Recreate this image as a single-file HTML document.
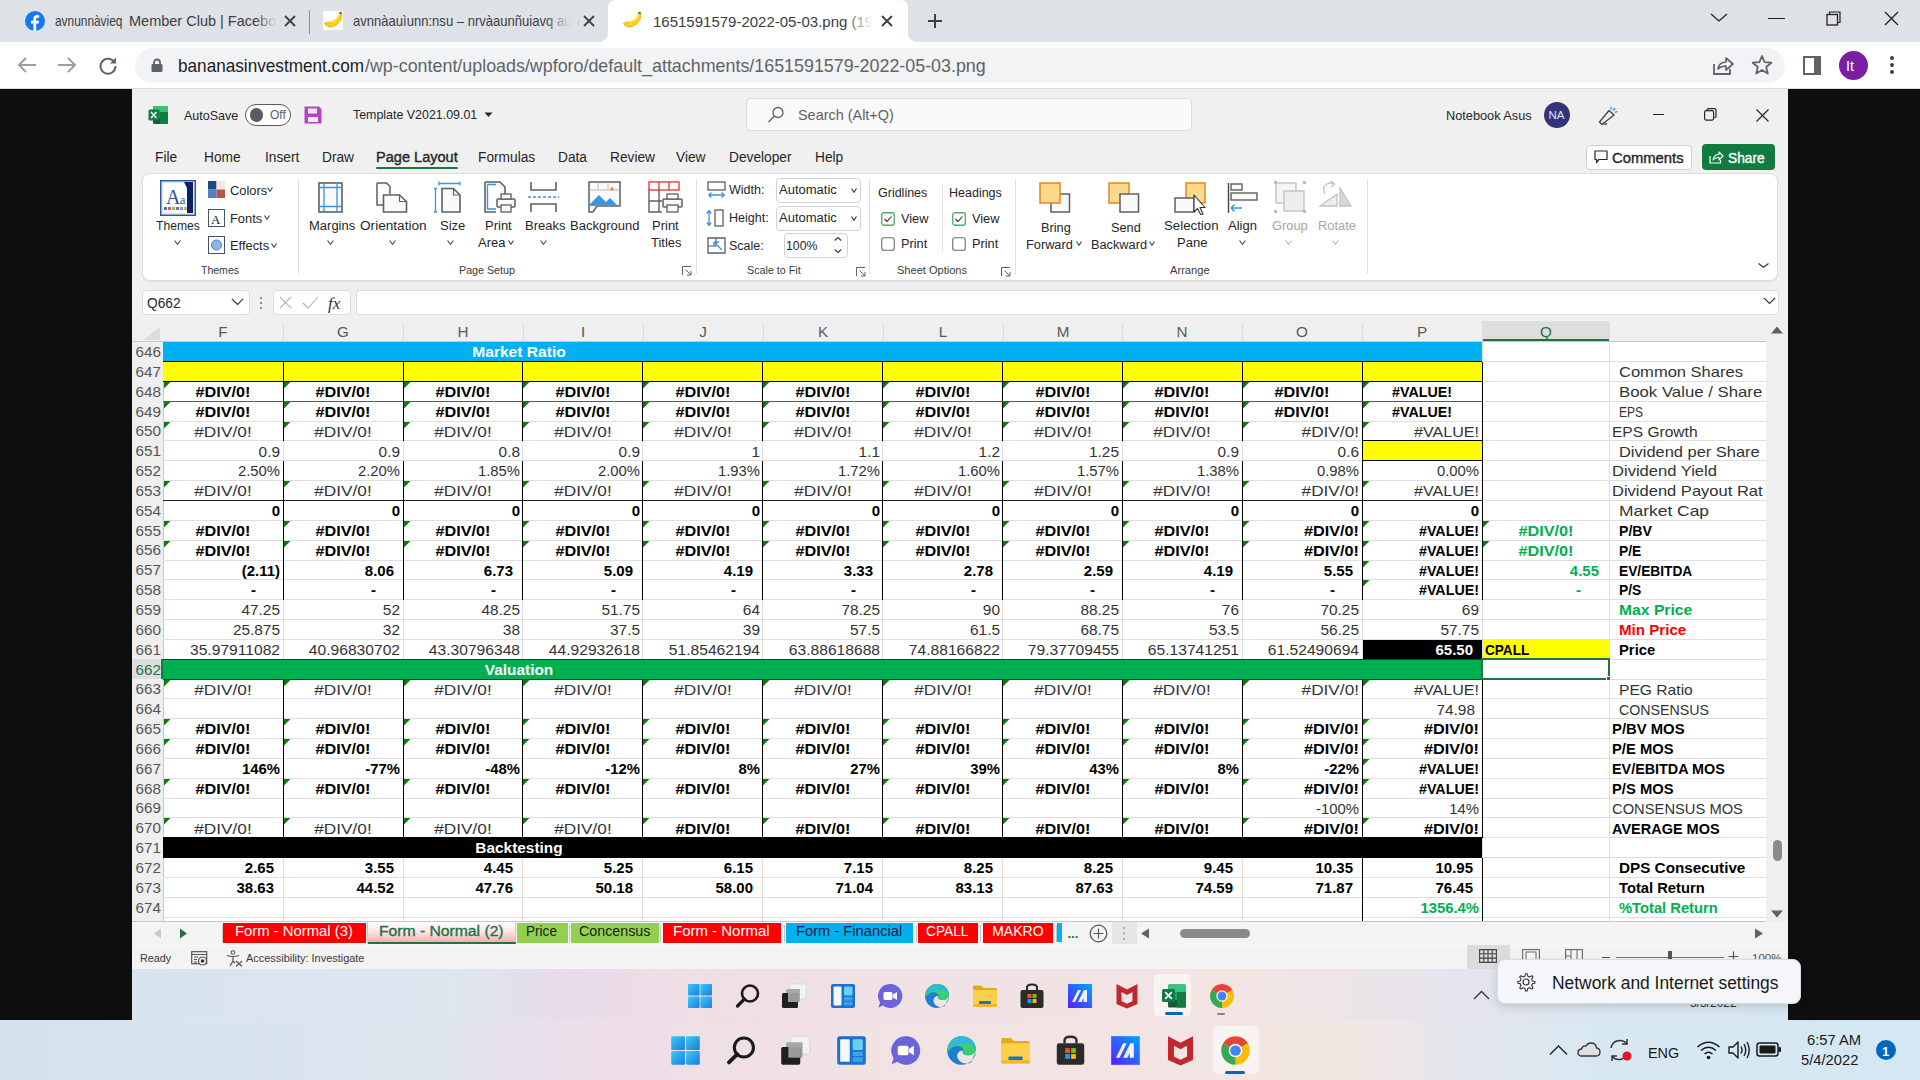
<!DOCTYPE html><html><head><meta charset="utf-8"><style>
*{box-sizing:border-box}
html,body{margin:0;padding:0;width:1920px;height:1080px;overflow:hidden;background:#0e0e0e;font-family:"Liberation Sans", sans-serif;position:relative}
.a{position:absolute}
.t{position:absolute;white-space:nowrap;line-height:1}
</style></head><body>
<div class="a" style="left:0px;top:0px;width:1920px;height:43px;background:#dee1e6;"></div><div class="a" style="left:0px;top:42px;width:1920px;height:46px;background:#ffffff;"></div><div class="a" style="left:0px;top:88px;width:1920px;height:1px;background:#dadce0;"></div><svg class="a" style="left:592px;top:0px;" width="332" height="43" viewBox="0 0 332 43"><path d="M0 43 Q16 43 16 33 L16 8 Q16 0 24 0 L308 0 Q316 0 316 8 L316 33 Q316 43 332 43 Z" fill="#fff"/></svg><svg class="a" style="left:25px;top:11px;" width="20" height="20" viewBox="0 0 20 20"><circle cx="10" cy="10" r="10" fill="#1877f2"/><path d="M11.2 20 V12.6 H13.6 L14 9.8 H11.2 V8.1 C11.2 7.3 11.5 6.7 12.6 6.7 H14.1 V4.2 C13.8 4.2 12.9 4.1 11.9 4.1 C9.8 4.1 8.4 5.4 8.4 7.7 V9.8 H6 V12.6 H8.4 V20 Z" fill="#fff"/></svg><div class="t" style="left:55px;top:13.73px;font-size:14.5px;color:#3c4043;font-weight:400;transform:scaleX(0.82);transform-origin:0 0;">avnunnàvieq</div><div class="t" style="left:129px;top:13.73px;font-size:14.5px;color:#3c4043;font-weight:400;">Member Club | Facebo</div><div class="a" style="left:255px;top:8px;width:22px;height:28px;background:linear-gradient(90deg, rgba(222,225,230,0), #dee1e6);"></div><svg class="a" style="left:284px;top:15px;" width="12" height="12" viewBox="0 0 12 12"><path d="M1 1 L11 11 M11 1 L1 11" stroke="#3c4043" stroke-width="1.8"/></svg><div class="a" style="left:309px;top:10px;width:1px;height:24px;background:#8e9196;"></div><svg class="a" style="left:323px;top:11px;" width="20" height="19" viewBox="0 0 20 19"><rect x="0" y="0" width="20" height="19" fill="#fff"/><path d="M1.5 12.5 C4 17.5 12 17.5 17.5 9.5 C18.8 7.5 19 5 18.5 2.5 L16.5 2.5 C16 8 11 12.5 4 11.5 Z" fill="#ffcf1f" stroke="#e5a400" stroke-width="0.8"/><path d="M3 10 C9 11 14 8 15.5 3 L17 3 C17 6 14 10.5 8 11.8 Z" fill="#ffe55c"/><path d="M16.3 1 L18.6 0.8 L18.8 3 L16.6 3 Z" fill="#7a5a10"/></svg><div class="t" style="left:353px;top:13.73px;font-size:14.5px;color:#3c4043;font-weight:400;transform:scaleX(0.9);transform-origin:0 0;">avnnàauìunn:nsu – nrvàaunñuiavq aun</div><div class="a" style="left:545px;top:8px;width:33px;height:28px;background:linear-gradient(90deg, rgba(222,225,230,0), #dee1e6 80%);"></div><svg class="a" style="left:583px;top:15px;" width="12" height="12" viewBox="0 0 12 12"><path d="M1 1 L11 11 M11 1 L1 11" stroke="#3c4043" stroke-width="1.8"/></svg><svg class="a" style="left:622px;top:11px;" width="20" height="19" viewBox="0 0 20 19"><path d="M1.5 12.5 C4 17.5 12 17.5 17.5 9.5 C18.8 7.5 19 5 18.5 2.5 L16.5 2.5 C16 8 11 12.5 4 11.5 Z" fill="#ffcf1f" stroke="#e5a400" stroke-width="0.8"/><path d="M3 10 C9 11 14 8 15.5 3 L17 3 C17 6 14 10.5 8 11.8 Z" fill="#ffe55c"/><path d="M16.3 1 L18.6 0.8 L18.8 3 L16.6 3 Z" fill="#7a5a10"/></svg><div class="t" style="left:653px;top:14.3px;font-size:15px;color:#3c4043;font-weight:400;">1651591579-2022-05-03.png (19</div><div class="a" style="left:845px;top:8px;width:28px;height:28px;background:linear-gradient(90deg, rgba(255,255,255,0), #fff);"></div><svg class="a" style="left:881px;top:15px;" width="12" height="12" viewBox="0 0 12 12"><path d="M1 1 L11 11 M11 1 L1 11" stroke="#3c4043" stroke-width="1.8"/></svg><svg class="a" style="left:927px;top:13px;" width="16" height="16" viewBox="0 0 16 16"><path d="M8 1 V15 M1 8 H15" stroke="#3c4043" stroke-width="2"/></svg><svg class="a" style="left:1710px;top:13px;" width="18" height="10" viewBox="0 0 18 10"><path d="M1 1 L9 8 L17 1" stroke="#202124" stroke-width="1.3" fill="none"/></svg><div class="a" style="left:1768px;top:18px;width:17px;height:1.3px;background:#202124;"></div><svg class="a" style="left:1826px;top:11px;" width="15" height="15" viewBox="0 0 15 15"><rect x="1" y="3.5" width="10.5" height="10.5" stroke="#202124" stroke-width="1.3" fill="none"/><path d="M3.5 3.5 V1 H14 V11.5 H11.5" stroke="#202124" stroke-width="1.2" fill="none"/></svg><svg class="a" style="left:1884px;top:11px;" width="15" height="15" viewBox="0 0 15 15"><path d="M1 1 L14 14 M14 1 L1 14" stroke="#202124" stroke-width="1.3"/></svg><svg class="a" style="left:17px;top:56px;" width="20" height="18" viewBox="0 0 20 18"><path d="M19 9 H3 M9 2 L2 9 L9 16" stroke="#9aa0a6" stroke-width="2" fill="none"/></svg><svg class="a" style="left:57px;top:56px;" width="20" height="18" viewBox="0 0 20 18"><path d="M1 9 H17 M11 2 L18 9 L11 16" stroke="#9aa0a6" stroke-width="2" fill="none"/></svg><svg class="a" style="left:98px;top:55px;" width="20" height="20" viewBox="0 0 20 20"><path d="M16.5 7.5 A7.5 7.5 0 1 0 17.5 11" stroke="#5f6368" stroke-width="2" fill="none"/><path d="M18 2.5 V8.5 H12 Z" fill="#5f6368"/></svg><div class="a" style="left:135px;top:48px;width:1650px;height:35px;background:#f1f3f4;border-radius:17.5px"></div><svg class="a" style="left:151px;top:58px;" width="12" height="14" viewBox="0 0 12 14"><path d="M3 6 V4.5 A3 3 0 0 1 9 4.5 V6" stroke="#5f6368" stroke-width="1.8" fill="none"/><rect x="0.5" y="6" width="11" height="8" rx="1" fill="#5f6368"/></svg><div class="t" style="left:178px;top:58.02px;font-size:17.7px;color:#202124;font-weight:400;transform:scaleX(0.97);transform-origin:0 0;">bananasinvestment.com</div><div class="t" style="left:364.5px;top:58.02px;font-size:17.7px;color:#5f6368;font-weight:400;transform:scaleX(1.01);transform-origin:0 0;">/wp-content/uploads/wpforo/default_attachments/1651591579-2022-05-03.png</div><svg class="a" style="left:1711px;top:54px;" width="24" height="22" viewBox="0 0 24 22"><path d="M3 10 V20 H19 V15" stroke="#5f6368" stroke-width="1.8" fill="none"/><path d="M7 15 Q8 8 15 8 V4 L22 10 L15 16 V12 Q10 12 7 15 Z" stroke="#5f6368" stroke-width="1.7" fill="none" stroke-linejoin="round"/></svg><svg class="a" style="left:1751px;top:54px;" width="22" height="22" viewBox="0 0 22 22"><path d="M11 2 L13.6 8.2 L20.3 8.7 L15.2 13 L16.8 19.6 L11 16 L5.2 19.6 L6.8 13 L1.7 8.7 L8.4 8.2 Z" stroke="#5f6368" stroke-width="1.8" fill="none" stroke-linejoin="round"/></svg><svg class="a" style="left:1803px;top:56px;" width="19" height="19" viewBox="0 0 19 19"><rect x="1" y="1" width="16" height="17" stroke="#5f6368" stroke-width="2" fill="none"/><rect x="11" y="1" width="6" height="17" fill="#5f6368"/></svg><div class="a" style="left:1839px;top:51px;width:29px;height:29px;background:#7b1fa2;border-radius:50%"></div><div class="t" style="left:1846px;top:58.73px;font-size:14.5px;color:#fff;font-weight:400;">It</div><svg class="a" style="left:1888px;top:55px;" width="8" height="20" viewBox="0 0 8 20"><circle cx="4" cy="3" r="2" fill="#3c4043"/><circle cx="4" cy="10" r="2" fill="#3c4043"/><circle cx="4" cy="17" r="2" fill="#3c4043"/></svg><div class="a" style="left:132px;top:88.5px;width:1656px;height:931.5px;background:#f0f0f0;"></div><svg class="a" style="left:148px;top:105px;" width="21" height="20" viewBox="0 0 21 20"><rect x="5" y="1" width="15" height="18" rx="1.5" fill="#185c37"/><rect x="5" y="1" width="15" height="6" rx="1" fill="#33c481"/><rect x="5" y="7" width="15" height="6" fill="#21a366"/><rect x="12" y="7" width="8" height="12" fill="#107c41"/><rect x="0.5" y="4.5" width="11" height="11" rx="1.2" fill="#107c41"/><path d="M3 7 L8.5 13 M8.5 7 L3 13" stroke="#fff" stroke-width="1.6"/></svg><div class="t" style="left:184px;top:109.0px;font-size:13px;color:#262626;font-weight:400;transform:scaleX(0.96);transform-origin:0 0;">AutoSave</div><div class="a" style="left:245px;top:104px;width:46px;height:21.5px;background:#fff;border:1.5px solid #5c5c5c;border-radius:11px"></div><div class="a" style="left:249.5px;top:108px;width:13.5px;height:13.5px;border-radius:50%;background:#5c5c5c"></div><div class="t" style="left:270px;top:108.84px;font-size:12px;color:#5c5c5c;font-weight:400;">Off</div><svg class="a" style="left:304px;top:106px;" width="18" height="18" viewBox="0 0 18 18"><path d="M0.5 0.5 H15 L17.5 3 V17.5 H0.5 Z" fill="#b146c2"/><rect x="4" y="2.5" width="9" height="5" fill="#f6e6f9"/><rect x="4" y="11" width="10" height="5" fill="#f6e6f9"/></svg><div class="t" style="left:353px;top:109.16px;font-size:12.8px;color:#262626;font-weight:400;transform:scaleX(0.97);transform-origin:0 0;">Template V2021.09.01</div><svg class="a" style="left:484px;top:112px;" width="9" height="6" viewBox="0 0 9 6"><path d="M0.5 0.5 H8.5 L4.5 5 Z" fill="#262626"/></svg><div class="a" style="left:745.5px;top:98px;width:446px;height:33px;background:#fafafa;border:1px solid #dadada;border-radius:4px"></div><svg class="a" style="left:767px;top:106px;" width="18" height="18" viewBox="0 0 18 18"><circle cx="11" cy="6.5" r="5" stroke="#616161" stroke-width="1.3" fill="none"/><path d="M7.5 10 L1.5 16" stroke="#616161" stroke-width="1.5"/></svg><div class="t" style="left:798px;top:107.73px;font-size:14.5px;color:#616161;font-weight:400;transform:scaleX(0.995);transform-origin:0 0;">Search (Alt+Q)</div><div class="t" style="left:1446px;top:109.0px;font-size:13px;color:#262626;font-weight:400;transform:scaleX(0.98);transform-origin:0 0;">Notebook Asus</div><div class="a" style="left:1544px;top:102px;width:26px;height:26px;background:#35337a;border-radius:50%"></div><div class="t" style="left:1548.5px;top:109.77px;font-size:11.5px;color:#dfe6ff;font-weight:400;">NA</div><svg class="a" style="left:1597px;top:104px;" width="24" height="22" viewBox="0 0 24 22"><path d="M2.5 18 L12 6.5 L17 11 L5 20.5 Z" stroke="#424242" stroke-width="1.3" fill="none" stroke-linejoin="round"/><path d="M6 18.5 Q7.5 21.5 10 19.5" stroke="#424242" stroke-width="1.2" fill="none"/><path d="M14.5 3 L13.8 5.5 M18 4 L16.2 6.5 M20.5 7.5 L18 8.3" stroke="#1e8fe0" stroke-width="1.3"/></svg><div class="a" style="left:1652.5px;top:113.5px;width:11px;height:1.3px;background:#262626;"></div><svg class="a" style="left:1704px;top:108px;" width="13" height="13" viewBox="0 0 13 13"><rect x="0.6" y="2.6" width="9" height="9.5" rx="1.5" stroke="#262626" stroke-width="1.2" fill="none"/><path d="M3 2.6 V2 Q3 0.6 4.5 0.6 H10.5 Q12 0.6 12 2 V8 Q12 9.6 10.5 9.6" stroke="#262626" stroke-width="1.2" fill="none"/></svg><svg class="a" style="left:1756px;top:108.5px;" width="13" height="13" viewBox="0 0 13 13"><path d="M0.5 0.5 L12.5 12.5 M12.5 0.5 L0.5 12.5" stroke="#262626" stroke-width="1.2"/></svg><div class="t" style="left:154.5px;top:150.35px;font-size:14px;color:#262626;font-weight:400;transform:scaleX(0.98);transform-origin:0 0;">File</div><div class="t" style="left:204px;top:150.35px;font-size:14px;color:#262626;font-weight:400;transform:scaleX(0.98);transform-origin:0 0;">Home</div><div class="t" style="left:265px;top:150.35px;font-size:14px;color:#262626;font-weight:400;transform:scaleX(0.98);transform-origin:0 0;">Insert</div><div class="t" style="left:322px;top:150.35px;font-size:14px;color:#262626;font-weight:400;transform:scaleX(0.98);transform-origin:0 0;">Draw</div><div class="t" style="left:478px;top:150.35px;font-size:14px;color:#262626;font-weight:400;transform:scaleX(0.98);transform-origin:0 0;">Formulas</div><div class="t" style="left:558px;top:150.35px;font-size:14px;color:#262626;font-weight:400;transform:scaleX(0.98);transform-origin:0 0;">Data</div><div class="t" style="left:610px;top:150.35px;font-size:14px;color:#262626;font-weight:400;transform:scaleX(0.98);transform-origin:0 0;">Review</div><div class="t" style="left:676px;top:150.35px;font-size:14px;color:#262626;font-weight:400;transform:scaleX(0.98);transform-origin:0 0;">View</div><div class="t" style="left:728.5px;top:150.35px;font-size:14px;color:#262626;font-weight:400;transform:scaleX(0.98);transform-origin:0 0;">Developer</div><div class="t" style="left:815px;top:150.35px;font-size:14px;color:#262626;font-weight:400;transform:scaleX(0.98);transform-origin:0 0;">Help</div><div class="t" style="left:376px;top:150.35px;font-size:14px;color:#262626;font-weight:400;transform:scaleX(1.04);transform-origin:0 0;-webkit-text-stroke:0.35px #262626;">Page Layout</div><div class="a" style="left:376px;top:166.5px;width:82px;height:2.5px;background:#107c41;border-radius:1px"></div><div class="a" style="left:1586px;top:144.5px;width:106px;height:25px;background:#fff;border:1px solid #d1d1d1;border-radius:4px"></div><svg class="a" style="left:1594px;top:150px;" width="14" height="14" viewBox="0 0 14 14"><path d="M1 1 H13 V9.5 H5 L2.5 12.5 V9.5 H1 Z" stroke="#262626" stroke-width="1.2" fill="none" stroke-linejoin="round"/></svg><div class="t" style="left:1611.5px;top:150.65px;font-size:14px;color:#262626;font-weight:400;transform:scaleX(1.058);transform-origin:0 0;-webkit-text-stroke:0.35px #262626;">Comments</div><div class="a" style="left:1702px;top:144px;width:73px;height:26px;background:#107c41;border-radius:4px"></div><svg class="a" style="left:1709px;top:150px;" width="15" height="14" viewBox="0 0 15 14"><path d="M1 6 V13 H11.5 V10" stroke="#fff" stroke-width="1.2" fill="none"/><path d="M4 10 Q5 4.5 10 4.5 V2 L14 6 L10 10 V7.3 Q6.5 7.3 4 10 Z" stroke="#fff" stroke-width="1.1" fill="none" stroke-linejoin="round"/></svg><div class="t" style="left:1728px;top:150.65px;font-size:14px;color:#fff;font-weight:400;transform:scaleX(0.98);transform-origin:0 0;-webkit-text-stroke:0.35px #fff;">Share</div><div class="a" style="left:141.5px;top:173px;width:1636px;height:108px;background:#fff;border:1px solid #dedede;border-radius:8px;box-shadow:0 1px 1.5px rgba(0,0,0,0.08)"></div><svg class="a" style="left:160px;top:180px;" width="36" height="36" viewBox="0 0 36 36"><rect x="0.75" y="0.75" width="34.5" height="34.5" fill="#fff" stroke="#2f5597" stroke-width="1.5"/><rect x="2.5" y="2.5" width="31" height="31" fill="#fff" stroke="#c7d2e8" stroke-width="0.6"/><path d="M24 2 H33 V33 H27 V8 Z" fill="#0b2265"/><text x="6" y="24" font-family="Liberation Serif" font-size="20" fill="#2f5597">A</text><text x="20" y="24" font-family="Liberation Serif" font-size="12" fill="#2f5597">a</text><rect x="4" y="27" width="3" height="3" fill="#4472c4"/><rect x="8" y="27" width="3" height="3" fill="#e15759"/><rect x="12" y="27" width="3" height="3" fill="#8cc152"/><rect x="16" y="27" width="3" height="3" fill="#9b59b6"/><rect x="20" y="27" width="3" height="3" fill="#2ec4d6"/><rect x="24" y="27" width="3" height="3" fill="#ff9f43"/></svg><div class="t" style="left:155.5px;top:220.22px;font-size:12.5px;color:#262626;font-weight:400;transform:scaleX(0.97);transform-origin:0 0;">Themes</div><svg class="a" style="left:173.5px;top:240.0px;" width="7" height="5" viewBox="0 0 7 5"><path d="M0.5 0.5 L3.5 4.3 L6.5 0.5" stroke="#444" stroke-width="1.1" fill="none"/></svg><svg class="a" style="left:208px;top:181px;" width="17" height="17" viewBox="0 0 17 17"><rect x="0" y="0" width="8.5" height="8.5" fill="#1f497d"/><rect x="8.5" y="0" width="8.5" height="8.5" fill="#eeece1"/><rect x="0" y="8.5" width="8.5" height="8.5" fill="#4f81bd"/><rect x="8.5" y="8.5" width="8.5" height="8.5" fill="#c0504d"/></svg><div class="t" style="left:229.5px;top:185.22px;font-size:12.5px;color:#262626;font-weight:400;transform:scaleX(1.03);transform-origin:0 0;">Colors</div><svg class="a" style="left:267.0px;top:187.0px;" width="6" height="5" viewBox="0 0 6 5"><path d="M0.5 0.5 L3.0 4.3 L5.5 0.5" stroke="#444" stroke-width="1.1" fill="none"/></svg><svg class="a" style="left:208px;top:208.5px;" width="17" height="18" viewBox="0 0 17 18"><rect x="0.5" y="0.5" width="16" height="17" fill="#fff" stroke="#44546a" stroke-width="1"/><text x="3" y="15" font-family="Liberation Serif" font-size="13" fill="#1a1a1a">A</text></svg><div class="t" style="left:229.5px;top:212.82px;font-size:12.5px;color:#262626;font-weight:400;transform:scaleX(1.03);transform-origin:0 0;">Fonts</div><svg class="a" style="left:264.0px;top:215.0px;" width="6" height="5" viewBox="0 0 6 5"><path d="M0.5 0.5 L3.0 4.3 L5.5 0.5" stroke="#444" stroke-width="1.1" fill="none"/></svg><svg class="a" style="left:208px;top:236px;" width="17" height="18" viewBox="0 0 17 18"><rect x="0.5" y="0.5" width="16" height="17" fill="#fff" stroke="#44546a" stroke-width="1"/><circle cx="8.5" cy="9" r="5" fill="#8db4e2" stroke="#4f81bd" stroke-width="1"/></svg><div class="t" style="left:229.5px;top:240.12px;font-size:12.5px;color:#262626;font-weight:400;transform:scaleX(1.03);transform-origin:0 0;">Effects</div><svg class="a" style="left:270.5px;top:242.5px;" width="6" height="5" viewBox="0 0 6 5"><path d="M0.5 0.5 L3.0 4.3 L5.5 0.5" stroke="#444" stroke-width="1.1" fill="none"/></svg><div class="t" style="left:201px;top:265.02px;font-size:11.2px;color:#3a3a3a;font-weight:400;transform:scaleX(0.94);transform-origin:0 0;">Themes</div><div class="a" style="left:297.5px;top:179px;width:1px;height:95px;background:#e1e1e1;"></div><svg class="a" style="left:318px;top:182px;" width="25" height="31" viewBox="0 0 25 31"><rect x="1" y="1" width="23" height="29" fill="#fafafa" stroke="#5f5f5f" stroke-width="1.6"/><path d="M1 5.5 H24 M1 24.5 H24 M6 1 V30 M19 1 V30" stroke="#3a96dd" stroke-width="1.3"/></svg><div class="t" style="left:309px;top:219.92px;font-size:12.5px;color:#262626;font-weight:400;transform:scaleX(1.04);transform-origin:0 0;">Margins</div><svg class="a" style="left:327.0px;top:240.0px;" width="7" height="5" viewBox="0 0 7 5"><path d="M0.5 0.5 L3.5 4.3 L6.5 0.5" stroke="#444" stroke-width="1.1" fill="none"/></svg><svg class="a" style="left:376px;top:182px;" width="32" height="31" viewBox="0 0 32 31"><path d="M1 1 H10.5 L14 4.5 V12 M1 1 V23 H7" stroke="#5f5f5f" stroke-width="1.5" fill="#fafafa"/><path d="M7.5 13 H23.5 L30.5 19.5 V30 H7.5 Z" stroke="#5f5f5f" stroke-width="1.6" fill="#fafafa"/><path d="M23.5 13 V19.5 H30.5" stroke="#5f5f5f" stroke-width="1.2" fill="none"/></svg><div class="t" style="left:360px;top:219.92px;font-size:12.5px;color:#262626;font-weight:400;transform:scaleX(1.09);transform-origin:0 0;">Orientation</div><svg class="a" style="left:388.5px;top:240.0px;" width="7" height="5" viewBox="0 0 7 5"><path d="M0.5 0.5 L3.5 4.3 L6.5 0.5" stroke="#444" stroke-width="1.1" fill="none"/></svg><svg class="a" style="left:434px;top:181px;" width="28" height="32" viewBox="0 0 28 32"><path d="M5 2.5 H26 M5 0.5 V4.5 M26 0.5 V4.5 M1.5 7.5 V31 M0 7.5 H3 M0 31 H3" stroke="#3a96dd" stroke-width="1.3"/><path d="M8 7.5 H19.5 L26 14 V31 H8 Z" stroke="#5f5f5f" stroke-width="1.6" fill="#fafafa"/><path d="M19.5 7.5 V14 H26" stroke="#5f5f5f" stroke-width="1.2" fill="none"/></svg><div class="t" style="left:439.5px;top:219.92px;font-size:12.5px;color:#262626;font-weight:400;transform:scaleX(1.04);transform-origin:0 0;">Size</div><svg class="a" style="left:447.0px;top:240.0px;" width="7" height="5" viewBox="0 0 7 5"><path d="M0.5 0.5 L3.5 4.3 L6.5 0.5" stroke="#444" stroke-width="1.1" fill="none"/></svg><svg class="a" style="left:484px;top:181px;" width="32" height="32" viewBox="0 0 32 32"><path d="M1 1 H16 L21 6 V14 M1 1 V31 H12" stroke="#5f5f5f" stroke-width="1.6" fill="#fafafa"/><path d="M3.5 3.5 V28 H12 M3.5 3.5 H12" stroke="#3a96dd" stroke-width="1.3" fill="none"/><rect x="13" y="18" width="18" height="8" rx="1" stroke="#5f5f5f" stroke-width="1.5" fill="#fafafa"/><rect x="17" y="13" width="10" height="5" stroke="#5f5f5f" stroke-width="1.3" fill="#fafafa"/><rect x="17" y="24" width="10" height="7" stroke="#5f5f5f" stroke-width="1.3" fill="#fafafa"/></svg><div class="t" style="left:485px;top:219.92px;font-size:12.5px;color:#262626;font-weight:400;transform:scaleX(1.04);transform-origin:0 0;">Print</div><div class="t" style="left:478px;top:237.12px;font-size:12.5px;color:#262626;font-weight:400;transform:scaleX(1.04);transform-origin:0 0;">Area</div><svg class="a" style="left:507.5px;top:240.0px;" width="6" height="5" viewBox="0 0 6 5"><path d="M0.5 0.5 L3.0 4.3 L5.5 0.5" stroke="#444" stroke-width="1.1" fill="none"/></svg><svg class="a" style="left:527px;top:181px;" width="33" height="32" viewBox="0 0 33 32"><path d="M4 1 V9 H29 V1" stroke="#5f5f5f" stroke-width="1.6" fill="none"/><path d="M1 16 H32" stroke="#3a96dd" stroke-width="1.5" stroke-dasharray="3 2"/><path d="M4 31 V23 H29 V31" stroke="#5f5f5f" stroke-width="1.6" fill="none"/></svg><div class="t" style="left:525px;top:219.92px;font-size:12.5px;color:#262626;font-weight:400;transform:scaleX(1.04);transform-origin:0 0;">Breaks</div><svg class="a" style="left:540.0px;top:240.0px;" width="7" height="5" viewBox="0 0 7 5"><path d="M0.5 0.5 L3.5 4.3 L6.5 0.5" stroke="#444" stroke-width="1.1" fill="none"/></svg><svg class="a" style="left:588px;top:181px;" width="33" height="32" viewBox="0 0 33 32"><path d="M1 1 H32 V25 H9 L5 31 H1 Z" stroke="#5f5f5f" stroke-width="1.5" fill="#fafafa"/><path d="M1 9 H32 M10 1 V9 M20 1 V9" stroke="#aaa" stroke-width="0.8"/><path d="M1 24 L11 14 L18 21 L22 17 L30 25 H1 Z" fill="#3a96dd"/><circle cx="24" cy="8" r="1.8" fill="#f28a2e"/></svg><div class="t" style="left:570px;top:219.92px;font-size:12.5px;color:#262626;font-weight:400;transform:scaleX(1.04);transform-origin:0 0;">Background</div><svg class="a" style="left:648px;top:181px;" width="35" height="32" viewBox="0 0 35 32"><path d="M1 1 H31 V9 H1 Z M1 9 H31 M11 1 V9 M21 1 V9" stroke="#e84b4b" stroke-width="1.5" fill="none"/><path d="M1 9 V31 H14 M1 20 H14 M11 9 V31" stroke="#5f5f5f" stroke-width="1.4" fill="none"/><rect x="15" y="18" width="19" height="8" rx="1" stroke="#5f5f5f" stroke-width="1.5" fill="#fafafa"/><rect x="19" y="13" width="11" height="5" stroke="#5f5f5f" stroke-width="1.3" fill="#fafafa"/><rect x="19" y="24" width="11" height="7" stroke="#5f5f5f" stroke-width="1.3" fill="#fafafa"/></svg><div class="t" style="left:652px;top:219.92px;font-size:12.5px;color:#262626;font-weight:400;transform:scaleX(1.04);transform-origin:0 0;">Print</div><div class="t" style="left:651px;top:237.12px;font-size:12.5px;color:#262626;font-weight:400;transform:scaleX(1.04);transform-origin:0 0;">Titles</div><div class="t" style="left:459px;top:265.02px;font-size:11.2px;color:#3a3a3a;font-weight:400;transform:scaleX(0.957);transform-origin:0 0;">Page Setup</div><svg class="a" style="left:681.5px;top:265.5px;" width="10" height="10" viewBox="0 0 10 10"><path d="M0.5 9 V0.5 H9" stroke="#616161" stroke-width="1" fill="none"/><path d="M3.5 3.5 L9 9 M9 5 V9 H5" stroke="#616161" stroke-width="1" fill="none"/></svg><div class="a" style="left:695.5px;top:179px;width:1px;height:95px;background:#e1e1e1;"></div><svg class="a" style="left:707px;top:181px;" width="19" height="18" viewBox="0 0 19 18"><rect x="1" y="1" width="17" height="8" stroke="#5f5f5f" stroke-width="1.3" fill="none"/><path d="M1.5 14 H17.5 M1.5 14 L4.5 11.5 M1.5 14 L4.5 16.5 M17.5 14 L14.5 11.5 M17.5 14 L14.5 16.5" stroke="#3a96dd" stroke-width="1.3" fill="none"/></svg><div class="t" style="left:729px;top:184.22px;font-size:12.5px;color:#262626;font-weight:400;">Width:</div><div class="a" style="left:775.5px;top:177.5px;width:85px;height:25px;background:#fff;border:1px solid #d1d1d1;border-radius:4px"></div><div class="t" style="left:778.5px;top:184.22px;font-size:12.5px;color:#262626;font-weight:400;transform:scaleX(1.04);transform-origin:0 0;">Automatic</div><svg class="a" style="left:851.0px;top:188.0px;" width="6" height="5" viewBox="0 0 6 5"><path d="M0.5 0.5 L3.0 4.3 L5.5 0.5" stroke="#333" stroke-width="1.1" fill="none"/></svg><svg class="a" style="left:706px;top:209px;" width="19" height="18" viewBox="0 0 19 18"><rect x="9" y="1" width="8" height="16" stroke="#5f5f5f" stroke-width="1.3" fill="none"/><path d="M3 1.5 V16.5 M3 1.5 L0.8 4.5 M3 1.5 L5.2 4.5 M3 16.5 L0.8 13.5 M3 16.5 L5.2 13.5" stroke="#3a96dd" stroke-width="1.3" fill="none"/></svg><div class="t" style="left:729px;top:212.22px;font-size:12.5px;color:#262626;font-weight:400;">Height:</div><div class="a" style="left:775.5px;top:205.5px;width:85px;height:25px;background:#fff;border:1px solid #d1d1d1;border-radius:4px"></div><div class="t" style="left:778.5px;top:212.22px;font-size:12.5px;color:#262626;font-weight:400;transform:scaleX(1.04);transform-origin:0 0;">Automatic</div><svg class="a" style="left:851.0px;top:215.5px;" width="6" height="5" viewBox="0 0 6 5"><path d="M0.5 0.5 L3.0 4.3 L5.5 0.5" stroke="#333" stroke-width="1.1" fill="none"/></svg><svg class="a" style="left:707px;top:236.5px;" width="19" height="17" viewBox="0 0 19 17"><path d="M1 1 H18 V16 H1 Z" stroke="#5f5f5f" stroke-width="1.3" fill="none"/><path d="M1 9 H9 V1" stroke="#5f5f5f" stroke-width="1.2" fill="none"/><path d="M15 13 L7 5 M7 5 V10 M7 5 H12" stroke="#3a96dd" stroke-width="1.3" fill="none"/></svg><div class="t" style="left:729px;top:239.62px;font-size:12.5px;color:#262626;font-weight:400;">Scale:</div><div class="a" style="left:783.5px;top:232.5px;width:64px;height:25px;background:#fff;border:1px solid #d1d1d1;border-radius:4px"></div><div class="t" style="left:786px;top:239.62px;font-size:12.5px;color:#262626;font-weight:400;transform:scaleX(0.98);transform-origin:0 0;">100%</div><svg class="a" style="left:834px;top:236px;" width="8" height="18" viewBox="0 0 8 18"><path d="M0.8 4.5 L4 1.5 L7.2 4.5 M0.8 13.5 L4 16.5 L7.2 13.5" stroke="#333" stroke-width="1.1" fill="none"/></svg><div class="t" style="left:746.5px;top:264.52px;font-size:11.2px;color:#3a3a3a;font-weight:400;transform:scaleX(0.96);transform-origin:0 0;">Scale to Fit</div><svg class="a" style="left:855.5px;top:266.5px;" width="10" height="10" viewBox="0 0 10 10"><path d="M0.5 9 V0.5 H9" stroke="#616161" stroke-width="1" fill="none"/><path d="M3.5 3.5 L9 9 M9 5 V9 H5" stroke="#616161" stroke-width="1" fill="none"/></svg><div class="a" style="left:869px;top:179px;width:1px;height:95px;background:#e1e1e1;"></div><div class="t" style="left:878px;top:186.82px;font-size:12.5px;color:#262626;font-weight:400;">Gridlines</div><svg class="a" style="left:881px;top:211.5px;" width="14" height="14" viewBox="0 0 14 14"><rect x="0.75" y="0.75" width="12.5" height="12.5" rx="2" stroke="#55a868" stroke-width="1.3" fill="#fff"/><path d="M3.5 7 L6 9.5 L10.5 4.5" stroke="#262626" stroke-width="1.1" fill="none"/></svg><div class="t" style="left:900.5px;top:212.62px;font-size:12.5px;color:#262626;font-weight:400;transform:scaleX(1.02);transform-origin:0 0;">View</div><svg class="a" style="left:881px;top:237px;" width="14" height="14" viewBox="0 0 14 14"><rect x="0.75" y="0.75" width="12.5" height="12.5" rx="2" stroke="#6b6b6b" stroke-width="1.1" fill="#fff"/></svg><div class="t" style="left:900.5px;top:238.22px;font-size:12.5px;color:#262626;font-weight:400;transform:scaleX(1.02);transform-origin:0 0;">Print</div><div class="a" style="left:942px;top:185px;width:1px;height:67px;background:#e1e1e1;"></div><div class="t" style="left:949px;top:186.82px;font-size:12.5px;color:#262626;font-weight:400;">Headings</div><svg class="a" style="left:952px;top:211.5px;" width="14" height="14" viewBox="0 0 14 14"><rect x="0.75" y="0.75" width="12.5" height="12.5" rx="2" stroke="#55a868" stroke-width="1.3" fill="#fff"/><path d="M3.5 7 L6 9.5 L10.5 4.5" stroke="#262626" stroke-width="1.1" fill="none"/></svg><div class="t" style="left:971.5px;top:212.62px;font-size:12.5px;color:#262626;font-weight:400;transform:scaleX(1.02);transform-origin:0 0;">View</div><svg class="a" style="left:952px;top:237px;" width="14" height="14" viewBox="0 0 14 14"><rect x="0.75" y="0.75" width="12.5" height="12.5" rx="2" stroke="#6b6b6b" stroke-width="1.1" fill="#fff"/></svg><div class="t" style="left:971.5px;top:238.22px;font-size:12.5px;color:#262626;font-weight:400;transform:scaleX(1.02);transform-origin:0 0;">Print</div><div class="t" style="left:897px;top:264.52px;font-size:11.2px;color:#3a3a3a;font-weight:400;transform:scaleX(0.987);transform-origin:0 0;">Sheet Options</div><svg class="a" style="left:1001px;top:266.5px;" width="10" height="10" viewBox="0 0 10 10"><path d="M0.5 9 V0.5 H9" stroke="#616161" stroke-width="1" fill="none"/><path d="M3.5 3.5 L9 9 M9 5 V9 H5" stroke="#616161" stroke-width="1" fill="none"/></svg><div class="a" style="left:1014.5px;top:179px;width:1px;height:95px;background:#e1e1e1;"></div><svg class="a" style="left:1039px;top:182px;" width="32" height="31" viewBox="0 0 32 31"><rect x="12" y="12" width="18.5" height="18" stroke="#5f5f5f" stroke-width="1.5" fill="#fafafa"/><rect x="1" y="1" width="20" height="20" stroke="#e8861c" stroke-width="1.5" fill="#f9d98c"/></svg><div class="t" style="left:1041px;top:221.82px;font-size:12.5px;color:#262626;font-weight:400;transform:scaleX(1.02);transform-origin:0 0;">Bring</div><div class="t" style="left:1026px;top:238.62px;font-size:12.5px;color:#262626;font-weight:400;transform:scaleX(1.02);transform-origin:0 0;">Forward</div><svg class="a" style="left:1076.0px;top:241.0px;" width="6" height="5" viewBox="0 0 6 5"><path d="M0.5 0.5 L3.0 4.3 L5.5 0.5" stroke="#444" stroke-width="1.1" fill="none"/></svg><svg class="a" style="left:1108px;top:182px;" width="32" height="31" viewBox="0 0 32 31"><rect x="1" y="1" width="20" height="20" stroke="#e8861c" stroke-width="1.5" fill="#f9d98c"/><rect x="12" y="12" width="18.5" height="18" stroke="#5f5f5f" stroke-width="1.5" fill="#fafafa"/></svg><div class="t" style="left:1110.5px;top:221.82px;font-size:12.5px;color:#262626;font-weight:400;transform:scaleX(1.02);transform-origin:0 0;">Send</div><div class="t" style="left:1091px;top:238.62px;font-size:12.5px;color:#262626;font-weight:400;transform:scaleX(1.02);transform-origin:0 0;">Backward</div><svg class="a" style="left:1149.0px;top:241.0px;" width="6" height="5" viewBox="0 0 6 5"><path d="M0.5 0.5 L3.0 4.3 L5.5 0.5" stroke="#444" stroke-width="1.1" fill="none"/></svg><svg class="a" style="left:1174px;top:182px;" width="34" height="33" viewBox="0 0 34 33"><rect x="12" y="1" width="19" height="20" stroke="#e8861c" stroke-width="1.5" fill="#f9d98c"/><rect x="1" y="16" width="19" height="14" stroke="#5f5f5f" stroke-width="1.5" fill="#fafafa"/><path d="M20 13 L20 30 L23.5 26.5 L27 33 L29 32 L26 25.5 L31 25.5 Z" stroke="#333" stroke-width="1.1" fill="#fff" stroke-linejoin="round"/></svg><div class="t" style="left:1164px;top:219.82px;font-size:12.5px;color:#262626;font-weight:400;transform:scaleX(1.06);transform-origin:0 0;">Selection</div><div class="t" style="left:1176.5px;top:237.02px;font-size:12.5px;color:#262626;font-weight:400;transform:scaleX(1.04);transform-origin:0 0;">Pane</div><svg class="a" style="left:1227px;top:182px;" width="32" height="32" viewBox="0 0 32 32"><path d="M1.5 1 V31" stroke="#444" stroke-width="1.4"/><rect x="4" y="2" width="11" height="6" stroke="#5f5f5f" stroke-width="1.4" fill="#fafafa"/><rect x="4" y="11" width="26" height="7" stroke="#5f5f5f" stroke-width="1.4" fill="#fafafa"/><path d="M4 26 H15 M4 26 L7.5 22.5 M4 26 L7.5 29.5" stroke="#3a96dd" stroke-width="1.5" fill="none"/></svg><div class="t" style="left:1227.5px;top:219.82px;font-size:12.5px;color:#262626;font-weight:400;transform:scaleX(1.04);transform-origin:0 0;">Align</div><svg class="a" style="left:1238.5px;top:240.0px;" width="7" height="5" viewBox="0 0 7 5"><path d="M0.5 0.5 L3.5 4.3 L6.5 0.5" stroke="#444" stroke-width="1.1" fill="none"/></svg><svg class="a" style="left:1274px;top:181px;" width="32" height="33" viewBox="0 0 32 33"><rect x="2" y="2" width="20" height="20" stroke="#c2c2c2" stroke-width="1.4" fill="#f4f4f4"/><rect x="10" y="10" width="20" height="20" stroke="#c2c2c2" stroke-width="1.4" fill="#eee"/><rect x="0" y="0" width="3" height="3" fill="#bbb"/><rect x="29" y="0" width="3" height="3" fill="#bbb"/><rect x="0" y="29" width="3" height="3" fill="#bbb"/><rect x="29" y="29" width="3" height="3" fill="#bbb"/></svg><div class="t" style="left:1271.5px;top:219.82px;font-size:12.5px;color:#a6a6a6;font-weight:400;transform:scaleX(1.03);transform-origin:0 0;">Group</div><svg class="a" style="left:1284.5px;top:240.0px;" width="7" height="5" viewBox="0 0 7 5"><path d="M0.5 0.5 L3.5 4.3 L6.5 0.5" stroke="#b5b5b5" stroke-width="1.1" fill="none"/></svg><svg class="a" style="left:1319px;top:180px;" width="34" height="28" viewBox="0 0 34 28"><path d="M1 26 L18 14 V26 Z" fill="#ececec" stroke="#c2c2c2" stroke-width="1.3"/><path d="M21 26 V8 L32 26 Z" fill="#d8d8d8" stroke="#c2c2c2" stroke-width="1.3"/><path d="M6 14 Q2 7 8 4 Q12 2 15 4 M12 1 L15.5 4 L12 7" stroke="#c2c2c2" stroke-width="1.3" fill="none"/></svg><div class="t" style="left:1318px;top:219.82px;font-size:12.5px;color:#a6a6a6;font-weight:400;transform:scaleX(1.03);transform-origin:0 0;">Rotate</div><svg class="a" style="left:1331.5px;top:240.0px;" width="7" height="5" viewBox="0 0 7 5"><path d="M0.5 0.5 L3.5 4.3 L6.5 0.5" stroke="#b5b5b5" stroke-width="1.1" fill="none"/></svg><div class="t" style="left:1170px;top:264.82px;font-size:11.2px;color:#3a3a3a;font-weight:400;transform:scaleX(0.995);transform-origin:0 0;">Arrange</div><div class="a" style="left:1366.5px;top:179px;width:1px;height:95px;background:#e1e1e1;"></div><svg class="a" style="left:1757.5px;top:262.5px;" width="11" height="5" viewBox="0 0 11 5"><path d="M0.5 0.5 L5.5 4.3 L10.5 0.5" stroke="#333" stroke-width="1.1" fill="none"/></svg><div class="a" style="left:141.5px;top:289.5px;width:108px;height:25px;background:#fff;border:1px solid #dcdcdc;border-radius:4px"></div><div class="t" style="left:147px;top:295.65px;font-size:14px;color:#262626;font-weight:400;transform:scaleX(0.98);transform-origin:0 0;">Q662</div><svg class="a" style="left:231px;top:298px;" width="13" height="8" viewBox="0 0 13 8"><path d="M0.8 0.8 L6.5 6.5 L12.2 0.8" stroke="#333" stroke-width="1.2" fill="none"/></svg><svg class="a" style="left:259px;top:296px;" width="4" height="14" viewBox="0 0 4 14"><circle cx="2" cy="2" r="1.1" fill="#777"/><circle cx="2" cy="7" r="1.1" fill="#777"/><circle cx="2" cy="12" r="1.1" fill="#777"/></svg><div class="a" style="left:272.5px;top:289.5px;width:78px;height:25px;background:#fff;border:1px solid #dcdcdc;border-radius:4px"></div><svg class="a" style="left:279px;top:296px;" width="13" height="13" viewBox="0 0 13 13"><path d="M0.8 0.8 L12.2 12.2 M12.2 0.8 L0.8 12.2" stroke="#b0b0b0" stroke-width="1.1"/></svg><svg class="a" style="left:302px;top:296px;" width="17" height="13" viewBox="0 0 17 13"><path d="M0.8 7 L6 12 L16 1" stroke="#b0b0b0" stroke-width="1.1" fill="none"/></svg><div class="t" style="left:328px;top:294.61px;font-size:17px;color:#333;font-weight:400;font-family:'Liberation Serif';"><i>fx</i></div><div class="a" style="left:355.5px;top:289.5px;width:1423px;height:25px;background:#fff;border:1px solid #dcdcdc;border-radius:4px"></div><svg class="a" style="left:1763px;top:297px;" width="13" height="8" viewBox="0 0 13 8"><path d="M0.8 0.8 L6.5 6.5 L12.2 0.8" stroke="#333" stroke-width="1.2" fill="none"/></svg><div class="a" style="left:132px;top:321.4px;width:1634px;height:20.3px;background:#efefef;"></div><div class="a" style="left:132px;top:341.7px;width:31.25px;height:579.3px;background:#efefef;"></div><svg class="a" style="left:141px;top:326px;" width="20" height="15" viewBox="0 0 20 15"><path d="M19 1 V14 H2 Z" fill="#dcdcdc"/></svg><div class="a" style="left:163.25px;top:341.7px;width:1602.75px;height:579.3px;background:#fff;"></div><div class="t" style="left:223.2px;top:325.23px;font-size:14.5px;color:#5a5a5a;font-weight:400;transform:translateX(-50%) scaleX(1.05);transform-origin:50% 0;">F</div><div class="t" style="left:343.1px;top:325.23px;font-size:14.5px;color:#5a5a5a;font-weight:400;transform:translateX(-50%) scaleX(1.05);transform-origin:50% 0;">G</div><div class="t" style="left:463.0px;top:325.23px;font-size:14.5px;color:#5a5a5a;font-weight:400;transform:translateX(-50%) scaleX(1.05);transform-origin:50% 0;">H</div><div class="t" style="left:582.9000000000001px;top:325.23px;font-size:14.5px;color:#5a5a5a;font-weight:400;transform:translateX(-50%) scaleX(1.05);transform-origin:50% 0;">I</div><div class="t" style="left:702.8px;top:325.23px;font-size:14.5px;color:#5a5a5a;font-weight:400;transform:translateX(-50%) scaleX(1.05);transform-origin:50% 0;">J</div><div class="t" style="left:822.7px;top:325.23px;font-size:14.5px;color:#5a5a5a;font-weight:400;transform:translateX(-50%) scaleX(1.05);transform-origin:50% 0;">K</div><div class="t" style="left:942.5999999999999px;top:325.23px;font-size:14.5px;color:#5a5a5a;font-weight:400;transform:translateX(-50%) scaleX(1.05);transform-origin:50% 0;">L</div><div class="t" style="left:1062.5px;top:325.23px;font-size:14.5px;color:#5a5a5a;font-weight:400;transform:translateX(-50%) scaleX(1.05);transform-origin:50% 0;">M</div><div class="t" style="left:1182.4px;top:325.23px;font-size:14.5px;color:#5a5a5a;font-weight:400;transform:translateX(-50%) scaleX(1.05);transform-origin:50% 0;">N</div><div class="t" style="left:1302.3px;top:325.23px;font-size:14.5px;color:#5a5a5a;font-weight:400;transform:translateX(-50%) scaleX(1.05);transform-origin:50% 0;">O</div><div class="t" style="left:1422.2px;top:325.23px;font-size:14.5px;color:#5a5a5a;font-weight:400;transform:translateX(-50%) scaleX(1.05);transform-origin:50% 0;">P</div><div class="a" style="left:1482.15px;top:321.4px;width:127.14999999999986px;height:20.3px;background:#dedede;"></div><div class="a" style="left:1482.15px;top:339.2px;width:127.14999999999986px;height:2.5px;background:#217346;"></div><div class="t" style="left:1545.725px;top:325.23px;font-size:14.5px;color:#217346;font-weight:400;transform:translateX(-50%) scaleX(1.05);transform-origin:50% 0;">Q</div><div class="a" style="left:283.15px;top:323px;width:1px;height:18.7px;background:#dcdcdc;"></div><div class="a" style="left:403.05px;top:323px;width:1px;height:18.7px;background:#dcdcdc;"></div><div class="a" style="left:522.95px;top:323px;width:1px;height:18.7px;background:#dcdcdc;"></div><div class="a" style="left:642.85px;top:323px;width:1px;height:18.7px;background:#dcdcdc;"></div><div class="a" style="left:762.75px;top:323px;width:1px;height:18.7px;background:#dcdcdc;"></div><div class="a" style="left:882.65px;top:323px;width:1px;height:18.7px;background:#dcdcdc;"></div><div class="a" style="left:1002.55px;top:323px;width:1px;height:18.7px;background:#dcdcdc;"></div><div class="a" style="left:1122.45px;top:323px;width:1px;height:18.7px;background:#dcdcdc;"></div><div class="a" style="left:1242.35px;top:323px;width:1px;height:18.7px;background:#dcdcdc;"></div><div class="a" style="left:1362.25px;top:323px;width:1px;height:18.7px;background:#dcdcdc;"></div><div class="a" style="left:1482.15px;top:323px;width:1px;height:18.7px;background:#dcdcdc;"></div><div class="a" style="left:1609.3px;top:323px;width:1px;height:18.7px;background:#dcdcdc;"></div><div class="a" style="left:132px;top:341.2px;width:1634px;height:0.8px;background:#c8c8c8;"></div><div class="t" style="left:160.5px;top:345.03px;font-size:14.5px;color:#555;font-weight:400;transform:translateX(-100%) scaleX(1.05);transform-origin:100% 0;">646</div><div class="t" style="left:160.5px;top:364.87px;font-size:14.5px;color:#555;font-weight:400;transform:translateX(-100%) scaleX(1.05);transform-origin:100% 0;">647</div><div class="t" style="left:160.5px;top:384.72px;font-size:14.5px;color:#555;font-weight:400;transform:translateX(-100%) scaleX(1.05);transform-origin:100% 0;">648</div><div class="t" style="left:160.5px;top:404.57px;font-size:14.5px;color:#555;font-weight:400;transform:translateX(-100%) scaleX(1.05);transform-origin:100% 0;">649</div><div class="t" style="left:160.5px;top:424.41px;font-size:14.5px;color:#555;font-weight:400;transform:translateX(-100%) scaleX(1.05);transform-origin:100% 0;">650</div><div class="t" style="left:160.5px;top:444.25px;font-size:14.5px;color:#555;font-weight:400;transform:translateX(-100%) scaleX(1.05);transform-origin:100% 0;">651</div><div class="t" style="left:160.5px;top:464.1px;font-size:14.5px;color:#555;font-weight:400;transform:translateX(-100%) scaleX(1.05);transform-origin:100% 0;">652</div><div class="t" style="left:160.5px;top:483.95px;font-size:14.5px;color:#555;font-weight:400;transform:translateX(-100%) scaleX(1.05);transform-origin:100% 0;">653</div><div class="t" style="left:160.5px;top:503.79px;font-size:14.5px;color:#555;font-weight:400;transform:translateX(-100%) scaleX(1.05);transform-origin:100% 0;">654</div><div class="t" style="left:160.5px;top:523.63px;font-size:14.5px;color:#555;font-weight:400;transform:translateX(-100%) scaleX(1.05);transform-origin:100% 0;">655</div><div class="t" style="left:160.5px;top:543.48px;font-size:14.5px;color:#555;font-weight:400;transform:translateX(-100%) scaleX(1.05);transform-origin:100% 0;">656</div><div class="t" style="left:160.5px;top:563.33px;font-size:14.5px;color:#555;font-weight:400;transform:translateX(-100%) scaleX(1.05);transform-origin:100% 0;">657</div><div class="t" style="left:160.5px;top:583.17px;font-size:14.5px;color:#555;font-weight:400;transform:translateX(-100%) scaleX(1.05);transform-origin:100% 0;">658</div><div class="t" style="left:160.5px;top:603.01px;font-size:14.5px;color:#555;font-weight:400;transform:translateX(-100%) scaleX(1.05);transform-origin:100% 0;">659</div><div class="t" style="left:160.5px;top:622.86px;font-size:14.5px;color:#555;font-weight:400;transform:translateX(-100%) scaleX(1.05);transform-origin:100% 0;">660</div><div class="t" style="left:160.5px;top:642.71px;font-size:14.5px;color:#555;font-weight:400;transform:translateX(-100%) scaleX(1.05);transform-origin:100% 0;">661</div><div class="t" style="left:160.5px;top:662.55px;font-size:14.5px;color:#217346;font-weight:400;transform:translateX(-100%) scaleX(1.05);transform-origin:100% 0;">662</div><div class="t" style="left:160.5px;top:682.4px;font-size:14.5px;color:#555;font-weight:400;transform:translateX(-100%) scaleX(1.05);transform-origin:100% 0;">663</div><div class="t" style="left:160.5px;top:702.24px;font-size:14.5px;color:#555;font-weight:400;transform:translateX(-100%) scaleX(1.05);transform-origin:100% 0;">664</div><div class="t" style="left:160.5px;top:722.08px;font-size:14.5px;color:#555;font-weight:400;transform:translateX(-100%) scaleX(1.05);transform-origin:100% 0;">665</div><div class="t" style="left:160.5px;top:741.93px;font-size:14.5px;color:#555;font-weight:400;transform:translateX(-100%) scaleX(1.05);transform-origin:100% 0;">666</div><div class="t" style="left:160.5px;top:761.77px;font-size:14.5px;color:#555;font-weight:400;transform:translateX(-100%) scaleX(1.05);transform-origin:100% 0;">667</div><div class="t" style="left:160.5px;top:781.62px;font-size:14.5px;color:#555;font-weight:400;transform:translateX(-100%) scaleX(1.05);transform-origin:100% 0;">668</div><div class="t" style="left:160.5px;top:801.46px;font-size:14.5px;color:#555;font-weight:400;transform:translateX(-100%) scaleX(1.05);transform-origin:100% 0;">669</div><div class="t" style="left:160.5px;top:821.31px;font-size:14.5px;color:#555;font-weight:400;transform:translateX(-100%) scaleX(1.05);transform-origin:100% 0;">670</div><div class="t" style="left:160.5px;top:841.16px;font-size:14.5px;color:#555;font-weight:400;transform:translateX(-100%) scaleX(1.05);transform-origin:100% 0;">671</div><div class="t" style="left:160.5px;top:861.0px;font-size:14.5px;color:#555;font-weight:400;transform:translateX(-100%) scaleX(1.05);transform-origin:100% 0;">672</div><div class="t" style="left:160.5px;top:880.84px;font-size:14.5px;color:#555;font-weight:400;transform:translateX(-100%) scaleX(1.05);transform-origin:100% 0;">673</div><div class="t" style="left:160.5px;top:900.69px;font-size:14.5px;color:#555;font-weight:400;transform:translateX(-100%) scaleX(1.05);transform-origin:100% 0;">674</div><div class="t" style="left:160.5px;top:920.53px;font-size:14.5px;color:#555;font-weight:400;transform:translateX(-100%) scaleX(1.05);transform-origin:100% 0;">675</div><div class="a" style="left:132px;top:659.22px;width:31.25px;height:19.845px;background:#dedede;"></div><div class="t" style="left:160.5px;top:662.55px;font-size:14.5px;color:#217346;font-weight:400;transform:translateX(-100%) scaleX(1.05);transform-origin:100% 0;">662</div><div class="a" style="left:161px;top:659.22px;width:2.3px;height:19.845px;background:#217346;"></div><div class="a" style="left:163px;top:341.7px;width:0.8px;height:579.3px;background:#c8c8c8;"></div><div class="a" style="left:163.25px;top:341.7px;width:1318.9px;height:19.845px;background:#00b0f0;"></div><div class="a" style="left:163.25px;top:361.54px;width:1318.9px;height:19.845px;background:#ffff00;"></div><div class="a" style="left:1362.25px;top:440.92px;width:119.90000000000009px;height:19.845px;background:#ffff00;"></div><div class="a" style="left:1362.25px;top:639.38px;width:119.90000000000009px;height:19.845px;background:#000000;"></div><div class="a" style="left:1482.15px;top:639.38px;width:127.14999999999986px;height:19.845px;background:#ffff00;"></div><div class="a" style="left:163.25px;top:659.22px;width:1318.9px;height:19.845px;background:#00b050;"></div><div class="a" style="left:163.25px;top:837.83px;width:1318.9px;height:19.845px;background:#000000;"></div><div class="a" style="left:163.25px;top:361px;width:1602.75px;height:1px;background:#dedede;"></div><div class="a" style="left:163.25px;top:381px;width:1602.75px;height:1px;background:#dedede;"></div><div class="a" style="left:163.25px;top:401px;width:1602.75px;height:1px;background:#dedede;"></div><div class="a" style="left:163.25px;top:421px;width:1602.75px;height:1px;background:#dedede;"></div><div class="a" style="left:163.25px;top:440px;width:1602.75px;height:1px;background:#dedede;"></div><div class="a" style="left:163.25px;top:460px;width:1602.75px;height:1px;background:#dedede;"></div><div class="a" style="left:163.25px;top:480px;width:1602.75px;height:1px;background:#dedede;"></div><div class="a" style="left:163.25px;top:500px;width:1602.75px;height:1px;background:#dedede;"></div><div class="a" style="left:163.25px;top:520px;width:1602.75px;height:1px;background:#dedede;"></div><div class="a" style="left:163.25px;top:540px;width:1602.75px;height:1px;background:#dedede;"></div><div class="a" style="left:163.25px;top:560px;width:1602.75px;height:1px;background:#dedede;"></div><div class="a" style="left:163.25px;top:579px;width:1602.75px;height:1px;background:#dedede;"></div><div class="a" style="left:163.25px;top:599px;width:1602.75px;height:1px;background:#dedede;"></div><div class="a" style="left:163.25px;top:619px;width:1602.75px;height:1px;background:#dedede;"></div><div class="a" style="left:163.25px;top:639px;width:1602.75px;height:1px;background:#dedede;"></div><div class="a" style="left:163.25px;top:659px;width:1602.75px;height:1px;background:#dedede;"></div><div class="a" style="left:163.25px;top:679px;width:1602.75px;height:1px;background:#dedede;"></div><div class="a" style="left:163.25px;top:698px;width:1602.75px;height:1px;background:#dedede;"></div><div class="a" style="left:163.25px;top:718px;width:1602.75px;height:1px;background:#dedede;"></div><div class="a" style="left:163.25px;top:738px;width:1602.75px;height:1px;background:#dedede;"></div><div class="a" style="left:163.25px;top:758px;width:1602.75px;height:1px;background:#dedede;"></div><div class="a" style="left:163.25px;top:778px;width:1602.75px;height:1px;background:#dedede;"></div><div class="a" style="left:163.25px;top:798px;width:1602.75px;height:1px;background:#dedede;"></div><div class="a" style="left:163.25px;top:817px;width:1602.75px;height:1px;background:#dedede;"></div><div class="a" style="left:163.25px;top:837px;width:1602.75px;height:1px;background:#dedede;"></div><div class="a" style="left:163.25px;top:857px;width:1602.75px;height:1px;background:#dedede;"></div><div class="a" style="left:163.25px;top:877px;width:1602.75px;height:1px;background:#dedede;"></div><div class="a" style="left:163.25px;top:897px;width:1602.75px;height:1px;background:#dedede;"></div><div class="a" style="left:163.25px;top:917px;width:1602.75px;height:1px;background:#dedede;"></div><div class="a" style="left:283px;top:341.7px;width:1px;height:579.3px;background:#dedede;"></div><div class="a" style="left:403px;top:341.7px;width:1px;height:579.3px;background:#dedede;"></div><div class="a" style="left:522px;top:341.7px;width:1px;height:579.3px;background:#dedede;"></div><div class="a" style="left:642px;top:341.7px;width:1px;height:579.3px;background:#dedede;"></div><div class="a" style="left:762px;top:341.7px;width:1px;height:579.3px;background:#dedede;"></div><div class="a" style="left:882px;top:341.7px;width:1px;height:579.3px;background:#dedede;"></div><div class="a" style="left:1002px;top:341.7px;width:1px;height:579.3px;background:#dedede;"></div><div class="a" style="left:1122px;top:341.7px;width:1px;height:579.3px;background:#dedede;"></div><div class="a" style="left:1242px;top:341.7px;width:1px;height:579.3px;background:#dedede;"></div><div class="a" style="left:1362px;top:341.7px;width:1px;height:579.3px;background:#dedede;"></div><div class="a" style="left:1482px;top:341.7px;width:1px;height:579.3px;background:#dedede;"></div><div class="a" style="left:1609px;top:341.7px;width:1px;height:579.3px;background:#dedede;"></div><div class="a" style="left:1766px;top:341.7px;width:1px;height:579.3px;background:#dedede;"></div><div class="a" style="left:1765.5px;top:341.7px;width:1px;height:579.3px;background:#c8c8c8;"></div><div class="a" style="left:163.25px;top:341.7px;width:1318.9px;height:19.845px;background:#00b0f0;"></div><div class="a" style="left:163.25px;top:659.22px;width:1318.9px;height:19.845px;background:#00b050;"></div><div class="a" style="left:163.25px;top:837.83px;width:1318.9px;height:19.845px;background:#000000;"></div><div class="a" style="left:283px;top:361.54px;width:1px;height:79.38px;background:#000;"></div><div class="a" style="left:403px;top:361.54px;width:1px;height:79.38px;background:#000;"></div><div class="a" style="left:522px;top:361.54px;width:1px;height:79.38px;background:#000;"></div><div class="a" style="left:642px;top:361.54px;width:1px;height:79.38px;background:#000;"></div><div class="a" style="left:762px;top:361.54px;width:1px;height:79.38px;background:#000;"></div><div class="a" style="left:882px;top:361.54px;width:1px;height:79.38px;background:#000;"></div><div class="a" style="left:1002px;top:361.54px;width:1px;height:79.38px;background:#000;"></div><div class="a" style="left:1122px;top:361.54px;width:1px;height:79.38px;background:#000;"></div><div class="a" style="left:1242px;top:361.54px;width:1px;height:79.38px;background:#000;"></div><div class="a" style="left:1362px;top:361.54px;width:1px;height:79.38px;background:#000;"></div><div class="a" style="left:1482px;top:361.54px;width:1px;height:79.38px;background:#000;"></div><div class="a" style="left:283px;top:460.77px;width:1px;height:138.90999999999997px;background:#000;"></div><div class="a" style="left:403px;top:460.77px;width:1px;height:138.90999999999997px;background:#000;"></div><div class="a" style="left:522px;top:460.77px;width:1px;height:138.90999999999997px;background:#000;"></div><div class="a" style="left:642px;top:460.77px;width:1px;height:138.90999999999997px;background:#000;"></div><div class="a" style="left:762px;top:460.77px;width:1px;height:138.90999999999997px;background:#000;"></div><div class="a" style="left:882px;top:460.77px;width:1px;height:138.90999999999997px;background:#000;"></div><div class="a" style="left:1002px;top:460.77px;width:1px;height:138.90999999999997px;background:#000;"></div><div class="a" style="left:1122px;top:460.77px;width:1px;height:138.90999999999997px;background:#000;"></div><div class="a" style="left:1242px;top:460.77px;width:1px;height:138.90999999999997px;background:#000;"></div><div class="a" style="left:1362px;top:460.77px;width:1px;height:138.90999999999997px;background:#000;"></div><div class="a" style="left:1482px;top:460.77px;width:1px;height:138.90999999999997px;background:#000;"></div><div class="a" style="left:283px;top:679.07px;width:1px;height:158.76px;background:#000;"></div><div class="a" style="left:403px;top:679.07px;width:1px;height:158.76px;background:#000;"></div><div class="a" style="left:522px;top:679.07px;width:1px;height:158.76px;background:#000;"></div><div class="a" style="left:642px;top:679.07px;width:1px;height:158.76px;background:#000;"></div><div class="a" style="left:762px;top:679.07px;width:1px;height:158.76px;background:#000;"></div><div class="a" style="left:882px;top:679.07px;width:1px;height:158.76px;background:#000;"></div><div class="a" style="left:1002px;top:679.07px;width:1px;height:158.76px;background:#000;"></div><div class="a" style="left:1122px;top:679.07px;width:1px;height:158.76px;background:#000;"></div><div class="a" style="left:1242px;top:679.07px;width:1px;height:158.76px;background:#000;"></div><div class="a" style="left:1362px;top:679.07px;width:1px;height:158.76px;background:#000;"></div><div class="a" style="left:1482px;top:679.07px;width:1px;height:158.76px;background:#000;"></div><div class="a" style="left:1362px;top:440.92px;width:1px;height:19.849999999999966px;background:#000;"></div><div class="a" style="left:1482px;top:440.92px;width:1px;height:19.849999999999966px;background:#000;"></div><div class="a" style="left:1362px;top:857.67px;width:1px;height:63.33000000000004px;background:#000;"></div><div class="a" style="left:1482px;top:857.67px;width:1px;height:63.33000000000004px;background:#000;"></div><div class="a" style="left:163.25px;top:361px;width:1318.9px;height:1px;background:#000;"></div><div class="a" style="left:163.25px;top:381px;width:1318.9px;height:1px;background:#000;"></div><div class="a" style="left:163.25px;top:401px;width:1318.9px;height:1px;background:#5a5a5a;"></div><div class="a" style="left:1362.25px;top:440px;width:119.90000000000009px;height:1px;background:#000;"></div><div class="a" style="left:1362.25px;top:460px;width:119.90000000000009px;height:1px;background:#000;"></div><div class="a" style="left:163.25px;top:500px;width:1318.9px;height:1px;background:#222;"></div><div class="a" style="left:163.25px;top:659px;width:1318.9px;height:1px;background:#333;"></div><div class="a" style="left:163.25px;top:679px;width:1318.9px;height:1px;background:#333;"></div><div class="a" style="left:163.25px;top:837px;width:1318.9px;height:1px;background:#000;"></div><div class="a" style="left:163.25px;top:857px;width:1318.9px;height:1px;background:#000;"></div><div class="a" style="left:1481.15px;top:658.22px;width:129.14999999999986px;height:21.845px;background:transparent;border:2px solid #217346"></div><div class="a" style="left:1606.3px;top:676.07px;width:5px;height:5px;background:#217346;border:1px solid #fff"></div><div class="t" style="left:223.2px;top:384.94px;font-size:14px;color:#000;font-weight:700;transform:translateX(-50%) scaleX(1.16);transform-origin:50% 0;">#DIV/0!</div><svg class="a" style="left:163.75px;top:381.89px;" width="7" height="7" viewBox="0 0 7 7"><path d="M0 0 H6.5 L0 6.5 Z" fill="#0f7b0f"/></svg><div class="t" style="left:343.1px;top:384.94px;font-size:14px;color:#000;font-weight:700;transform:translateX(-50%) scaleX(1.16);transform-origin:50% 0;">#DIV/0!</div><svg class="a" style="left:283.65px;top:381.89px;" width="7" height="7" viewBox="0 0 7 7"><path d="M0 0 H6.5 L0 6.5 Z" fill="#0f7b0f"/></svg><div class="t" style="left:463.0px;top:384.94px;font-size:14px;color:#000;font-weight:700;transform:translateX(-50%) scaleX(1.16);transform-origin:50% 0;">#DIV/0!</div><svg class="a" style="left:403.55px;top:381.89px;" width="7" height="7" viewBox="0 0 7 7"><path d="M0 0 H6.5 L0 6.5 Z" fill="#0f7b0f"/></svg><div class="t" style="left:582.9px;top:384.94px;font-size:14px;color:#000;font-weight:700;transform:translateX(-50%) scaleX(1.16);transform-origin:50% 0;">#DIV/0!</div><svg class="a" style="left:523.45px;top:381.89px;" width="7" height="7" viewBox="0 0 7 7"><path d="M0 0 H6.5 L0 6.5 Z" fill="#0f7b0f"/></svg><div class="t" style="left:702.8px;top:384.94px;font-size:14px;color:#000;font-weight:700;transform:translateX(-50%) scaleX(1.16);transform-origin:50% 0;">#DIV/0!</div><svg class="a" style="left:643.35px;top:381.89px;" width="7" height="7" viewBox="0 0 7 7"><path d="M0 0 H6.5 L0 6.5 Z" fill="#0f7b0f"/></svg><div class="t" style="left:822.7px;top:384.94px;font-size:14px;color:#000;font-weight:700;transform:translateX(-50%) scaleX(1.16);transform-origin:50% 0;">#DIV/0!</div><svg class="a" style="left:763.25px;top:381.89px;" width="7" height="7" viewBox="0 0 7 7"><path d="M0 0 H6.5 L0 6.5 Z" fill="#0f7b0f"/></svg><div class="t" style="left:942.6px;top:384.94px;font-size:14px;color:#000;font-weight:700;transform:translateX(-50%) scaleX(1.16);transform-origin:50% 0;">#DIV/0!</div><svg class="a" style="left:883.15px;top:381.89px;" width="7" height="7" viewBox="0 0 7 7"><path d="M0 0 H6.5 L0 6.5 Z" fill="#0f7b0f"/></svg><div class="t" style="left:1062.5px;top:384.94px;font-size:14px;color:#000;font-weight:700;transform:translateX(-50%) scaleX(1.16);transform-origin:50% 0;">#DIV/0!</div><svg class="a" style="left:1003.05px;top:381.89px;" width="7" height="7" viewBox="0 0 7 7"><path d="M0 0 H6.5 L0 6.5 Z" fill="#0f7b0f"/></svg><div class="t" style="left:1182.4px;top:384.94px;font-size:14px;color:#000;font-weight:700;transform:translateX(-50%) scaleX(1.16);transform-origin:50% 0;">#DIV/0!</div><svg class="a" style="left:1122.95px;top:381.89px;" width="7" height="7" viewBox="0 0 7 7"><path d="M0 0 H6.5 L0 6.5 Z" fill="#0f7b0f"/></svg><div class="t" style="left:1302.3px;top:384.94px;font-size:14px;color:#000;font-weight:700;transform:translateX(-50%) scaleX(1.16);transform-origin:50% 0;">#DIV/0!</div><svg class="a" style="left:1242.85px;top:381.89px;" width="7" height="7" viewBox="0 0 7 7"><path d="M0 0 H6.5 L0 6.5 Z" fill="#0f7b0f"/></svg><div class="t" style="left:1422.2px;top:384.94px;font-size:14px;color:#000;font-weight:700;transform:translateX(-50%) scaleX(1.02);transform-origin:50% 0;">#VALUE!</div><svg class="a" style="left:1362.75px;top:381.89px;" width="7" height="7" viewBox="0 0 7 7"><path d="M0 0 H6.5 L0 6.5 Z" fill="#0f7b0f"/></svg><div class="t" style="left:223.2px;top:404.79px;font-size:14px;color:#000;font-weight:700;transform:translateX(-50%) scaleX(1.16);transform-origin:50% 0;">#DIV/0!</div><svg class="a" style="left:163.75px;top:401.74px;" width="7" height="7" viewBox="0 0 7 7"><path d="M0 0 H6.5 L0 6.5 Z" fill="#0f7b0f"/></svg><div class="t" style="left:343.1px;top:404.79px;font-size:14px;color:#000;font-weight:700;transform:translateX(-50%) scaleX(1.16);transform-origin:50% 0;">#DIV/0!</div><svg class="a" style="left:283.65px;top:401.74px;" width="7" height="7" viewBox="0 0 7 7"><path d="M0 0 H6.5 L0 6.5 Z" fill="#0f7b0f"/></svg><div class="t" style="left:463.0px;top:404.79px;font-size:14px;color:#000;font-weight:700;transform:translateX(-50%) scaleX(1.16);transform-origin:50% 0;">#DIV/0!</div><svg class="a" style="left:403.55px;top:401.74px;" width="7" height="7" viewBox="0 0 7 7"><path d="M0 0 H6.5 L0 6.5 Z" fill="#0f7b0f"/></svg><div class="t" style="left:582.9px;top:404.79px;font-size:14px;color:#000;font-weight:700;transform:translateX(-50%) scaleX(1.16);transform-origin:50% 0;">#DIV/0!</div><svg class="a" style="left:523.45px;top:401.74px;" width="7" height="7" viewBox="0 0 7 7"><path d="M0 0 H6.5 L0 6.5 Z" fill="#0f7b0f"/></svg><div class="t" style="left:702.8px;top:404.79px;font-size:14px;color:#000;font-weight:700;transform:translateX(-50%) scaleX(1.16);transform-origin:50% 0;">#DIV/0!</div><svg class="a" style="left:643.35px;top:401.74px;" width="7" height="7" viewBox="0 0 7 7"><path d="M0 0 H6.5 L0 6.5 Z" fill="#0f7b0f"/></svg><div class="t" style="left:822.7px;top:404.79px;font-size:14px;color:#000;font-weight:700;transform:translateX(-50%) scaleX(1.16);transform-origin:50% 0;">#DIV/0!</div><svg class="a" style="left:763.25px;top:401.74px;" width="7" height="7" viewBox="0 0 7 7"><path d="M0 0 H6.5 L0 6.5 Z" fill="#0f7b0f"/></svg><div class="t" style="left:942.6px;top:404.79px;font-size:14px;color:#000;font-weight:700;transform:translateX(-50%) scaleX(1.16);transform-origin:50% 0;">#DIV/0!</div><svg class="a" style="left:883.15px;top:401.74px;" width="7" height="7" viewBox="0 0 7 7"><path d="M0 0 H6.5 L0 6.5 Z" fill="#0f7b0f"/></svg><div class="t" style="left:1062.5px;top:404.79px;font-size:14px;color:#000;font-weight:700;transform:translateX(-50%) scaleX(1.16);transform-origin:50% 0;">#DIV/0!</div><svg class="a" style="left:1003.05px;top:401.74px;" width="7" height="7" viewBox="0 0 7 7"><path d="M0 0 H6.5 L0 6.5 Z" fill="#0f7b0f"/></svg><div class="t" style="left:1182.4px;top:404.79px;font-size:14px;color:#000;font-weight:700;transform:translateX(-50%) scaleX(1.16);transform-origin:50% 0;">#DIV/0!</div><svg class="a" style="left:1122.95px;top:401.74px;" width="7" height="7" viewBox="0 0 7 7"><path d="M0 0 H6.5 L0 6.5 Z" fill="#0f7b0f"/></svg><div class="t" style="left:1302.3px;top:404.79px;font-size:14px;color:#000;font-weight:700;transform:translateX(-50%) scaleX(1.16);transform-origin:50% 0;">#DIV/0!</div><svg class="a" style="left:1242.85px;top:401.74px;" width="7" height="7" viewBox="0 0 7 7"><path d="M0 0 H6.5 L0 6.5 Z" fill="#0f7b0f"/></svg><div class="t" style="left:1422.2px;top:404.79px;font-size:14px;color:#000;font-weight:700;transform:translateX(-50%) scaleX(1.02);transform-origin:50% 0;">#VALUE!</div><svg class="a" style="left:1362.75px;top:401.74px;" width="7" height="7" viewBox="0 0 7 7"><path d="M0 0 H6.5 L0 6.5 Z" fill="#0f7b0f"/></svg><div class="t" style="left:223.2px;top:423.78px;font-size:15px;color:#333333;font-weight:400;transform:translateX(-50%) scaleX(1.148);transform-origin:50% 0;">#DIV/0!</div><svg class="a" style="left:163.75px;top:421.58px;" width="7" height="7" viewBox="0 0 7 7"><path d="M0 0 H6.5 L0 6.5 Z" fill="#0f7b0f"/></svg><div class="t" style="left:343.1px;top:423.78px;font-size:15px;color:#333333;font-weight:400;transform:translateX(-50%) scaleX(1.148);transform-origin:50% 0;">#DIV/0!</div><svg class="a" style="left:283.65px;top:421.58px;" width="7" height="7" viewBox="0 0 7 7"><path d="M0 0 H6.5 L0 6.5 Z" fill="#0f7b0f"/></svg><div class="t" style="left:463.0px;top:423.78px;font-size:15px;color:#333333;font-weight:400;transform:translateX(-50%) scaleX(1.148);transform-origin:50% 0;">#DIV/0!</div><svg class="a" style="left:403.55px;top:421.58px;" width="7" height="7" viewBox="0 0 7 7"><path d="M0 0 H6.5 L0 6.5 Z" fill="#0f7b0f"/></svg><div class="t" style="left:582.9px;top:423.78px;font-size:15px;color:#333333;font-weight:400;transform:translateX(-50%) scaleX(1.148);transform-origin:50% 0;">#DIV/0!</div><svg class="a" style="left:523.45px;top:421.58px;" width="7" height="7" viewBox="0 0 7 7"><path d="M0 0 H6.5 L0 6.5 Z" fill="#0f7b0f"/></svg><div class="t" style="left:702.8px;top:423.78px;font-size:15px;color:#333333;font-weight:400;transform:translateX(-50%) scaleX(1.148);transform-origin:50% 0;">#DIV/0!</div><svg class="a" style="left:643.35px;top:421.58px;" width="7" height="7" viewBox="0 0 7 7"><path d="M0 0 H6.5 L0 6.5 Z" fill="#0f7b0f"/></svg><div class="t" style="left:822.7px;top:423.78px;font-size:15px;color:#333333;font-weight:400;transform:translateX(-50%) scaleX(1.148);transform-origin:50% 0;">#DIV/0!</div><svg class="a" style="left:763.25px;top:421.58px;" width="7" height="7" viewBox="0 0 7 7"><path d="M0 0 H6.5 L0 6.5 Z" fill="#0f7b0f"/></svg><div class="t" style="left:942.6px;top:423.78px;font-size:15px;color:#333333;font-weight:400;transform:translateX(-50%) scaleX(1.148);transform-origin:50% 0;">#DIV/0!</div><svg class="a" style="left:883.15px;top:421.58px;" width="7" height="7" viewBox="0 0 7 7"><path d="M0 0 H6.5 L0 6.5 Z" fill="#0f7b0f"/></svg><div class="t" style="left:1062.5px;top:423.78px;font-size:15px;color:#333333;font-weight:400;transform:translateX(-50%) scaleX(1.148);transform-origin:50% 0;">#DIV/0!</div><svg class="a" style="left:1003.05px;top:421.58px;" width="7" height="7" viewBox="0 0 7 7"><path d="M0 0 H6.5 L0 6.5 Z" fill="#0f7b0f"/></svg><div class="t" style="left:1182.4px;top:423.78px;font-size:15px;color:#333333;font-weight:400;transform:translateX(-50%) scaleX(1.148);transform-origin:50% 0;">#DIV/0!</div><svg class="a" style="left:1122.95px;top:421.58px;" width="7" height="7" viewBox="0 0 7 7"><path d="M0 0 H6.5 L0 6.5 Z" fill="#0f7b0f"/></svg><div class="t" style="left:1359.25px;top:423.78px;font-size:15px;color:#333333;font-weight:400;transform:translateX(-100%) scaleX(1.148);transform-origin:100% 0;">#DIV/0!</div><svg class="a" style="left:1242.85px;top:421.58px;" width="7" height="7" viewBox="0 0 7 7"><path d="M0 0 H6.5 L0 6.5 Z" fill="#0f7b0f"/></svg><div class="t" style="left:1479.15px;top:423.78px;font-size:15px;color:#333333;font-weight:400;transform:translateX(-100%) scaleX(1.0733333333333333);transform-origin:100% 0;">#VALUE!</div><svg class="a" style="left:1362.75px;top:421.58px;" width="7" height="7" viewBox="0 0 7 7"><path d="M0 0 H6.5 L0 6.5 Z" fill="#0f7b0f"/></svg><div class="t" style="left:280.15px;top:443.62px;font-size:15px;color:#333333;font-weight:400;transform:translateX(-100%) scaleX(1.0266666666666668);transform-origin:100% 0;">0.9</div><div class="t" style="left:400.05px;top:443.62px;font-size:15px;color:#333333;font-weight:400;transform:translateX(-100%) scaleX(1.0266666666666668);transform-origin:100% 0;">0.9</div><div class="t" style="left:519.95px;top:443.62px;font-size:15px;color:#333333;font-weight:400;transform:translateX(-100%) scaleX(1.0266666666666668);transform-origin:100% 0;">0.8</div><div class="t" style="left:639.85px;top:443.62px;font-size:15px;color:#333333;font-weight:400;transform:translateX(-100%) scaleX(1.0266666666666668);transform-origin:100% 0;">0.9</div><div class="t" style="left:759.75px;top:443.62px;font-size:15px;color:#333333;font-weight:400;transform:translateX(-100%) scaleX(1.0266666666666668);transform-origin:100% 0;">1</div><div class="t" style="left:879.65px;top:443.62px;font-size:15px;color:#333333;font-weight:400;transform:translateX(-100%) scaleX(1.0266666666666668);transform-origin:100% 0;">1.1</div><div class="t" style="left:999.55px;top:443.62px;font-size:15px;color:#333333;font-weight:400;transform:translateX(-100%) scaleX(1.0266666666666668);transform-origin:100% 0;">1.2</div><div class="t" style="left:1119.45px;top:443.62px;font-size:15px;color:#333333;font-weight:400;transform:translateX(-100%) scaleX(1.0266666666666668);transform-origin:100% 0;">1.25</div><div class="t" style="left:1239.35px;top:443.62px;font-size:15px;color:#333333;font-weight:400;transform:translateX(-100%) scaleX(1.0266666666666668);transform-origin:100% 0;">0.9</div><div class="t" style="left:1359.25px;top:443.62px;font-size:15px;color:#333333;font-weight:400;transform:translateX(-100%) scaleX(1.0266666666666668);transform-origin:100% 0;">0.6</div><div class="t" style="left:280.15px;top:463.47px;font-size:15px;color:#333333;font-weight:400;transform:translateX(-100%) scaleX(0.9893333333333333);transform-origin:100% 0;">2.50%</div><div class="t" style="left:400.05px;top:463.47px;font-size:15px;color:#333333;font-weight:400;transform:translateX(-100%) scaleX(0.9893333333333333);transform-origin:100% 0;">2.20%</div><div class="t" style="left:519.95px;top:463.47px;font-size:15px;color:#333333;font-weight:400;transform:translateX(-100%) scaleX(0.9893333333333333);transform-origin:100% 0;">1.85%</div><div class="t" style="left:639.85px;top:463.47px;font-size:15px;color:#333333;font-weight:400;transform:translateX(-100%) scaleX(0.9893333333333333);transform-origin:100% 0;">2.00%</div><div class="t" style="left:759.75px;top:463.47px;font-size:15px;color:#333333;font-weight:400;transform:translateX(-100%) scaleX(0.9893333333333333);transform-origin:100% 0;">1.93%</div><div class="t" style="left:879.65px;top:463.47px;font-size:15px;color:#333333;font-weight:400;transform:translateX(-100%) scaleX(0.9893333333333333);transform-origin:100% 0;">1.72%</div><div class="t" style="left:999.55px;top:463.47px;font-size:15px;color:#333333;font-weight:400;transform:translateX(-100%) scaleX(0.9893333333333333);transform-origin:100% 0;">1.60%</div><div class="t" style="left:1119.45px;top:463.47px;font-size:15px;color:#333333;font-weight:400;transform:translateX(-100%) scaleX(0.9893333333333333);transform-origin:100% 0;">1.57%</div><div class="t" style="left:1239.35px;top:463.47px;font-size:15px;color:#333333;font-weight:400;transform:translateX(-100%) scaleX(0.9893333333333333);transform-origin:100% 0;">1.38%</div><div class="t" style="left:1359.25px;top:463.47px;font-size:15px;color:#333333;font-weight:400;transform:translateX(-100%) scaleX(0.9893333333333333);transform-origin:100% 0;">0.98%</div><div class="t" style="left:1479.15px;top:463.47px;font-size:15px;color:#333333;font-weight:400;transform:translateX(-100%) scaleX(0.9893333333333333);transform-origin:100% 0;">0.00%</div><div class="t" style="left:223.2px;top:483.32px;font-size:15px;color:#333333;font-weight:400;transform:translateX(-50%) scaleX(1.148);transform-origin:50% 0;">#DIV/0!</div><svg class="a" style="left:163.75px;top:481.12px;" width="7" height="7" viewBox="0 0 7 7"><path d="M0 0 H6.5 L0 6.5 Z" fill="#0f7b0f"/></svg><div class="t" style="left:343.1px;top:483.32px;font-size:15px;color:#333333;font-weight:400;transform:translateX(-50%) scaleX(1.148);transform-origin:50% 0;">#DIV/0!</div><svg class="a" style="left:283.65px;top:481.12px;" width="7" height="7" viewBox="0 0 7 7"><path d="M0 0 H6.5 L0 6.5 Z" fill="#0f7b0f"/></svg><div class="t" style="left:463.0px;top:483.32px;font-size:15px;color:#333333;font-weight:400;transform:translateX(-50%) scaleX(1.148);transform-origin:50% 0;">#DIV/0!</div><svg class="a" style="left:403.55px;top:481.12px;" width="7" height="7" viewBox="0 0 7 7"><path d="M0 0 H6.5 L0 6.5 Z" fill="#0f7b0f"/></svg><div class="t" style="left:582.9px;top:483.32px;font-size:15px;color:#333333;font-weight:400;transform:translateX(-50%) scaleX(1.148);transform-origin:50% 0;">#DIV/0!</div><svg class="a" style="left:523.45px;top:481.12px;" width="7" height="7" viewBox="0 0 7 7"><path d="M0 0 H6.5 L0 6.5 Z" fill="#0f7b0f"/></svg><div class="t" style="left:702.8px;top:483.32px;font-size:15px;color:#333333;font-weight:400;transform:translateX(-50%) scaleX(1.148);transform-origin:50% 0;">#DIV/0!</div><svg class="a" style="left:643.35px;top:481.12px;" width="7" height="7" viewBox="0 0 7 7"><path d="M0 0 H6.5 L0 6.5 Z" fill="#0f7b0f"/></svg><div class="t" style="left:822.7px;top:483.32px;font-size:15px;color:#333333;font-weight:400;transform:translateX(-50%) scaleX(1.148);transform-origin:50% 0;">#DIV/0!</div><svg class="a" style="left:763.25px;top:481.12px;" width="7" height="7" viewBox="0 0 7 7"><path d="M0 0 H6.5 L0 6.5 Z" fill="#0f7b0f"/></svg><div class="t" style="left:942.6px;top:483.32px;font-size:15px;color:#333333;font-weight:400;transform:translateX(-50%) scaleX(1.148);transform-origin:50% 0;">#DIV/0!</div><svg class="a" style="left:883.15px;top:481.12px;" width="7" height="7" viewBox="0 0 7 7"><path d="M0 0 H6.5 L0 6.5 Z" fill="#0f7b0f"/></svg><div class="t" style="left:1062.5px;top:483.32px;font-size:15px;color:#333333;font-weight:400;transform:translateX(-50%) scaleX(1.148);transform-origin:50% 0;">#DIV/0!</div><svg class="a" style="left:1003.05px;top:481.12px;" width="7" height="7" viewBox="0 0 7 7"><path d="M0 0 H6.5 L0 6.5 Z" fill="#0f7b0f"/></svg><div class="t" style="left:1182.4px;top:483.32px;font-size:15px;color:#333333;font-weight:400;transform:translateX(-50%) scaleX(1.148);transform-origin:50% 0;">#DIV/0!</div><svg class="a" style="left:1122.95px;top:481.12px;" width="7" height="7" viewBox="0 0 7 7"><path d="M0 0 H6.5 L0 6.5 Z" fill="#0f7b0f"/></svg><div class="t" style="left:1359.25px;top:483.32px;font-size:15px;color:#333333;font-weight:400;transform:translateX(-100%) scaleX(1.148);transform-origin:100% 0;">#DIV/0!</div><svg class="a" style="left:1242.85px;top:481.12px;" width="7" height="7" viewBox="0 0 7 7"><path d="M0 0 H6.5 L0 6.5 Z" fill="#0f7b0f"/></svg><div class="t" style="left:1479.15px;top:483.32px;font-size:15px;color:#333333;font-weight:400;transform:translateX(-100%) scaleX(1.0733333333333333);transform-origin:100% 0;">#VALUE!</div><svg class="a" style="left:1362.75px;top:481.12px;" width="7" height="7" viewBox="0 0 7 7"><path d="M0 0 H6.5 L0 6.5 Z" fill="#0f7b0f"/></svg><div class="t" style="left:280.15px;top:504.01px;font-size:14px;color:#000;font-weight:700;transform:translateX(-100%) scaleX(1.07);transform-origin:100% 0;">0</div><div class="t" style="left:400.05px;top:504.01px;font-size:14px;color:#000;font-weight:700;transform:translateX(-100%) scaleX(1.07);transform-origin:100% 0;">0</div><div class="t" style="left:519.95px;top:504.01px;font-size:14px;color:#000;font-weight:700;transform:translateX(-100%) scaleX(1.07);transform-origin:100% 0;">0</div><div class="t" style="left:639.85px;top:504.01px;font-size:14px;color:#000;font-weight:700;transform:translateX(-100%) scaleX(1.07);transform-origin:100% 0;">0</div><div class="t" style="left:759.75px;top:504.01px;font-size:14px;color:#000;font-weight:700;transform:translateX(-100%) scaleX(1.07);transform-origin:100% 0;">0</div><div class="t" style="left:879.65px;top:504.01px;font-size:14px;color:#000;font-weight:700;transform:translateX(-100%) scaleX(1.07);transform-origin:100% 0;">0</div><div class="t" style="left:999.55px;top:504.01px;font-size:14px;color:#000;font-weight:700;transform:translateX(-100%) scaleX(1.07);transform-origin:100% 0;">0</div><div class="t" style="left:1119.45px;top:504.01px;font-size:14px;color:#000;font-weight:700;transform:translateX(-100%) scaleX(1.07);transform-origin:100% 0;">0</div><div class="t" style="left:1239.35px;top:504.01px;font-size:14px;color:#000;font-weight:700;transform:translateX(-100%) scaleX(1.07);transform-origin:100% 0;">0</div><div class="t" style="left:1359.25px;top:504.01px;font-size:14px;color:#000;font-weight:700;transform:translateX(-100%) scaleX(1.07);transform-origin:100% 0;">0</div><div class="t" style="left:1479.15px;top:504.01px;font-size:14px;color:#000;font-weight:700;transform:translateX(-100%) scaleX(1.07);transform-origin:100% 0;">0</div><div class="t" style="left:223.2px;top:523.85px;font-size:14px;color:#000;font-weight:700;transform:translateX(-50%) scaleX(1.16);transform-origin:50% 0;">#DIV/0!</div><svg class="a" style="left:163.75px;top:520.8px;" width="7" height="7" viewBox="0 0 7 7"><path d="M0 0 H6.5 L0 6.5 Z" fill="#0f7b0f"/></svg><div class="t" style="left:343.1px;top:523.85px;font-size:14px;color:#000;font-weight:700;transform:translateX(-50%) scaleX(1.16);transform-origin:50% 0;">#DIV/0!</div><svg class="a" style="left:283.65px;top:520.8px;" width="7" height="7" viewBox="0 0 7 7"><path d="M0 0 H6.5 L0 6.5 Z" fill="#0f7b0f"/></svg><div class="t" style="left:463.0px;top:523.85px;font-size:14px;color:#000;font-weight:700;transform:translateX(-50%) scaleX(1.16);transform-origin:50% 0;">#DIV/0!</div><svg class="a" style="left:403.55px;top:520.8px;" width="7" height="7" viewBox="0 0 7 7"><path d="M0 0 H6.5 L0 6.5 Z" fill="#0f7b0f"/></svg><div class="t" style="left:582.9px;top:523.85px;font-size:14px;color:#000;font-weight:700;transform:translateX(-50%) scaleX(1.16);transform-origin:50% 0;">#DIV/0!</div><svg class="a" style="left:523.45px;top:520.8px;" width="7" height="7" viewBox="0 0 7 7"><path d="M0 0 H6.5 L0 6.5 Z" fill="#0f7b0f"/></svg><div class="t" style="left:702.8px;top:523.85px;font-size:14px;color:#000;font-weight:700;transform:translateX(-50%) scaleX(1.16);transform-origin:50% 0;">#DIV/0!</div><svg class="a" style="left:643.35px;top:520.8px;" width="7" height="7" viewBox="0 0 7 7"><path d="M0 0 H6.5 L0 6.5 Z" fill="#0f7b0f"/></svg><div class="t" style="left:822.7px;top:523.85px;font-size:14px;color:#000;font-weight:700;transform:translateX(-50%) scaleX(1.16);transform-origin:50% 0;">#DIV/0!</div><svg class="a" style="left:763.25px;top:520.8px;" width="7" height="7" viewBox="0 0 7 7"><path d="M0 0 H6.5 L0 6.5 Z" fill="#0f7b0f"/></svg><div class="t" style="left:942.6px;top:523.85px;font-size:14px;color:#000;font-weight:700;transform:translateX(-50%) scaleX(1.16);transform-origin:50% 0;">#DIV/0!</div><svg class="a" style="left:883.15px;top:520.8px;" width="7" height="7" viewBox="0 0 7 7"><path d="M0 0 H6.5 L0 6.5 Z" fill="#0f7b0f"/></svg><div class="t" style="left:1062.5px;top:523.85px;font-size:14px;color:#000;font-weight:700;transform:translateX(-50%) scaleX(1.16);transform-origin:50% 0;">#DIV/0!</div><svg class="a" style="left:1003.05px;top:520.8px;" width="7" height="7" viewBox="0 0 7 7"><path d="M0 0 H6.5 L0 6.5 Z" fill="#0f7b0f"/></svg><div class="t" style="left:1182.4px;top:523.85px;font-size:14px;color:#000;font-weight:700;transform:translateX(-50%) scaleX(1.16);transform-origin:50% 0;">#DIV/0!</div><svg class="a" style="left:1122.95px;top:520.8px;" width="7" height="7" viewBox="0 0 7 7"><path d="M0 0 H6.5 L0 6.5 Z" fill="#0f7b0f"/></svg><div class="t" style="left:1359.25px;top:523.85px;font-size:14px;color:#000;font-weight:700;transform:translateX(-100%) scaleX(1.16);transform-origin:100% 0;">#DIV/0!</div><svg class="a" style="left:1242.85px;top:520.8px;" width="7" height="7" viewBox="0 0 7 7"><path d="M0 0 H6.5 L0 6.5 Z" fill="#0f7b0f"/></svg><div class="t" style="left:1479.15px;top:523.85px;font-size:14px;color:#000;font-weight:700;transform:translateX(-100%) scaleX(1.02);transform-origin:100% 0;">#VALUE!</div><svg class="a" style="left:1362.75px;top:520.8px;" width="7" height="7" viewBox="0 0 7 7"><path d="M0 0 H6.5 L0 6.5 Z" fill="#0f7b0f"/></svg><div class="t" style="left:223.2px;top:543.7px;font-size:14px;color:#000;font-weight:700;transform:translateX(-50%) scaleX(1.16);transform-origin:50% 0;">#DIV/0!</div><svg class="a" style="left:163.75px;top:540.65px;" width="7" height="7" viewBox="0 0 7 7"><path d="M0 0 H6.5 L0 6.5 Z" fill="#0f7b0f"/></svg><div class="t" style="left:343.1px;top:543.7px;font-size:14px;color:#000;font-weight:700;transform:translateX(-50%) scaleX(1.16);transform-origin:50% 0;">#DIV/0!</div><svg class="a" style="left:283.65px;top:540.65px;" width="7" height="7" viewBox="0 0 7 7"><path d="M0 0 H6.5 L0 6.5 Z" fill="#0f7b0f"/></svg><div class="t" style="left:463.0px;top:543.7px;font-size:14px;color:#000;font-weight:700;transform:translateX(-50%) scaleX(1.16);transform-origin:50% 0;">#DIV/0!</div><svg class="a" style="left:403.55px;top:540.65px;" width="7" height="7" viewBox="0 0 7 7"><path d="M0 0 H6.5 L0 6.5 Z" fill="#0f7b0f"/></svg><div class="t" style="left:582.9px;top:543.7px;font-size:14px;color:#000;font-weight:700;transform:translateX(-50%) scaleX(1.16);transform-origin:50% 0;">#DIV/0!</div><svg class="a" style="left:523.45px;top:540.65px;" width="7" height="7" viewBox="0 0 7 7"><path d="M0 0 H6.5 L0 6.5 Z" fill="#0f7b0f"/></svg><div class="t" style="left:702.8px;top:543.7px;font-size:14px;color:#000;font-weight:700;transform:translateX(-50%) scaleX(1.16);transform-origin:50% 0;">#DIV/0!</div><svg class="a" style="left:643.35px;top:540.65px;" width="7" height="7" viewBox="0 0 7 7"><path d="M0 0 H6.5 L0 6.5 Z" fill="#0f7b0f"/></svg><div class="t" style="left:822.7px;top:543.7px;font-size:14px;color:#000;font-weight:700;transform:translateX(-50%) scaleX(1.16);transform-origin:50% 0;">#DIV/0!</div><svg class="a" style="left:763.25px;top:540.65px;" width="7" height="7" viewBox="0 0 7 7"><path d="M0 0 H6.5 L0 6.5 Z" fill="#0f7b0f"/></svg><div class="t" style="left:942.6px;top:543.7px;font-size:14px;color:#000;font-weight:700;transform:translateX(-50%) scaleX(1.16);transform-origin:50% 0;">#DIV/0!</div><svg class="a" style="left:883.15px;top:540.65px;" width="7" height="7" viewBox="0 0 7 7"><path d="M0 0 H6.5 L0 6.5 Z" fill="#0f7b0f"/></svg><div class="t" style="left:1062.5px;top:543.7px;font-size:14px;color:#000;font-weight:700;transform:translateX(-50%) scaleX(1.16);transform-origin:50% 0;">#DIV/0!</div><svg class="a" style="left:1003.05px;top:540.65px;" width="7" height="7" viewBox="0 0 7 7"><path d="M0 0 H6.5 L0 6.5 Z" fill="#0f7b0f"/></svg><div class="t" style="left:1182.4px;top:543.7px;font-size:14px;color:#000;font-weight:700;transform:translateX(-50%) scaleX(1.16);transform-origin:50% 0;">#DIV/0!</div><svg class="a" style="left:1122.95px;top:540.65px;" width="7" height="7" viewBox="0 0 7 7"><path d="M0 0 H6.5 L0 6.5 Z" fill="#0f7b0f"/></svg><div class="t" style="left:1359.25px;top:543.7px;font-size:14px;color:#000;font-weight:700;transform:translateX(-100%) scaleX(1.16);transform-origin:100% 0;">#DIV/0!</div><svg class="a" style="left:1242.85px;top:540.65px;" width="7" height="7" viewBox="0 0 7 7"><path d="M0 0 H6.5 L0 6.5 Z" fill="#0f7b0f"/></svg><div class="t" style="left:1479.15px;top:543.7px;font-size:14px;color:#000;font-weight:700;transform:translateX(-100%) scaleX(1.02);transform-origin:100% 0;">#VALUE!</div><svg class="a" style="left:1362.75px;top:540.65px;" width="7" height="7" viewBox="0 0 7 7"><path d="M0 0 H6.5 L0 6.5 Z" fill="#0f7b0f"/></svg><div class="t" style="left:280.15px;top:563.55px;font-size:14px;color:#000;font-weight:700;transform:translateX(-100%) scaleX(1.07);transform-origin:100% 0;">(2.11)</div><div class="t" style="left:393.55px;top:563.55px;font-size:14px;color:#000;font-weight:700;transform:translateX(-100%) scaleX(1.07);transform-origin:100% 0;">8.06</div><div class="t" style="left:513.45px;top:563.55px;font-size:14px;color:#000;font-weight:700;transform:translateX(-100%) scaleX(1.07);transform-origin:100% 0;">6.73</div><div class="t" style="left:633.35px;top:563.55px;font-size:14px;color:#000;font-weight:700;transform:translateX(-100%) scaleX(1.07);transform-origin:100% 0;">5.09</div><div class="t" style="left:753.25px;top:563.55px;font-size:14px;color:#000;font-weight:700;transform:translateX(-100%) scaleX(1.07);transform-origin:100% 0;">4.19</div><div class="t" style="left:873.15px;top:563.55px;font-size:14px;color:#000;font-weight:700;transform:translateX(-100%) scaleX(1.07);transform-origin:100% 0;">3.33</div><div class="t" style="left:993.05px;top:563.55px;font-size:14px;color:#000;font-weight:700;transform:translateX(-100%) scaleX(1.07);transform-origin:100% 0;">2.78</div><div class="t" style="left:1112.95px;top:563.55px;font-size:14px;color:#000;font-weight:700;transform:translateX(-100%) scaleX(1.07);transform-origin:100% 0;">2.59</div><div class="t" style="left:1232.85px;top:563.55px;font-size:14px;color:#000;font-weight:700;transform:translateX(-100%) scaleX(1.07);transform-origin:100% 0;">4.19</div><div class="t" style="left:1352.75px;top:563.55px;font-size:14px;color:#000;font-weight:700;transform:translateX(-100%) scaleX(1.07);transform-origin:100% 0;">5.55</div><div class="t" style="left:1479.15px;top:563.55px;font-size:14px;color:#000;font-weight:700;transform:translateX(-100%) scaleX(1.02);transform-origin:100% 0;">#VALUE!</div><svg class="a" style="left:1362.75px;top:560.5px;" width="7" height="7" viewBox="0 0 7 7"><path d="M0 0 H6.5 L0 6.5 Z" fill="#0f7b0f"/></svg><div class="t" style="left:256.15px;top:583.39px;font-size:14px;color:#000;font-weight:700;transform:translateX(-100%) scaleX(1.07);transform-origin:100% 0;">-</div><div class="t" style="left:376.05px;top:583.39px;font-size:14px;color:#000;font-weight:700;transform:translateX(-100%) scaleX(1.07);transform-origin:100% 0;">-</div><div class="t" style="left:495.95px;top:583.39px;font-size:14px;color:#000;font-weight:700;transform:translateX(-100%) scaleX(1.07);transform-origin:100% 0;">-</div><div class="t" style="left:615.85px;top:583.39px;font-size:14px;color:#000;font-weight:700;transform:translateX(-100%) scaleX(1.07);transform-origin:100% 0;">-</div><div class="t" style="left:735.75px;top:583.39px;font-size:14px;color:#000;font-weight:700;transform:translateX(-100%) scaleX(1.07);transform-origin:100% 0;">-</div><div class="t" style="left:855.65px;top:583.39px;font-size:14px;color:#000;font-weight:700;transform:translateX(-100%) scaleX(1.07);transform-origin:100% 0;">-</div><div class="t" style="left:975.55px;top:583.39px;font-size:14px;color:#000;font-weight:700;transform:translateX(-100%) scaleX(1.07);transform-origin:100% 0;">-</div><div class="t" style="left:1095.45px;top:583.39px;font-size:14px;color:#000;font-weight:700;transform:translateX(-100%) scaleX(1.07);transform-origin:100% 0;">-</div><div class="t" style="left:1215.35px;top:583.39px;font-size:14px;color:#000;font-weight:700;transform:translateX(-100%) scaleX(1.07);transform-origin:100% 0;">-</div><div class="t" style="left:1335.25px;top:583.39px;font-size:14px;color:#000;font-weight:700;transform:translateX(-100%) scaleX(1.07);transform-origin:100% 0;">-</div><div class="t" style="left:1479.15px;top:583.39px;font-size:14px;color:#000;font-weight:700;transform:translateX(-100%) scaleX(1.02);transform-origin:100% 0;">#VALUE!</div><svg class="a" style="left:1362.75px;top:580.34px;" width="7" height="7" viewBox="0 0 7 7"><path d="M0 0 H6.5 L0 6.5 Z" fill="#0f7b0f"/></svg><div class="t" style="left:280.15px;top:602.38px;font-size:15px;color:#333333;font-weight:400;transform:translateX(-100%) scaleX(1.0266666666666668);transform-origin:100% 0;">47.25</div><div class="t" style="left:400.05px;top:602.38px;font-size:15px;color:#333333;font-weight:400;transform:translateX(-100%) scaleX(1.0266666666666668);transform-origin:100% 0;">52</div><div class="t" style="left:519.95px;top:602.38px;font-size:15px;color:#333333;font-weight:400;transform:translateX(-100%) scaleX(1.0266666666666668);transform-origin:100% 0;">48.25</div><div class="t" style="left:639.85px;top:602.38px;font-size:15px;color:#333333;font-weight:400;transform:translateX(-100%) scaleX(1.0266666666666668);transform-origin:100% 0;">51.75</div><div class="t" style="left:759.75px;top:602.38px;font-size:15px;color:#333333;font-weight:400;transform:translateX(-100%) scaleX(1.0266666666666668);transform-origin:100% 0;">64</div><div class="t" style="left:879.65px;top:602.38px;font-size:15px;color:#333333;font-weight:400;transform:translateX(-100%) scaleX(1.0266666666666668);transform-origin:100% 0;">78.25</div><div class="t" style="left:999.55px;top:602.38px;font-size:15px;color:#333333;font-weight:400;transform:translateX(-100%) scaleX(1.0266666666666668);transform-origin:100% 0;">90</div><div class="t" style="left:1119.45px;top:602.38px;font-size:15px;color:#333333;font-weight:400;transform:translateX(-100%) scaleX(1.0266666666666668);transform-origin:100% 0;">88.25</div><div class="t" style="left:1239.35px;top:602.38px;font-size:15px;color:#333333;font-weight:400;transform:translateX(-100%) scaleX(1.0266666666666668);transform-origin:100% 0;">76</div><div class="t" style="left:1359.25px;top:602.38px;font-size:15px;color:#333333;font-weight:400;transform:translateX(-100%) scaleX(1.0266666666666668);transform-origin:100% 0;">70.25</div><div class="t" style="left:1479.15px;top:602.38px;font-size:15px;color:#333333;font-weight:400;transform:translateX(-100%) scaleX(1.0266666666666668);transform-origin:100% 0;">69</div><div class="t" style="left:280.15px;top:622.23px;font-size:15px;color:#333333;font-weight:400;transform:translateX(-100%) scaleX(1.0266666666666668);transform-origin:100% 0;">25.875</div><div class="t" style="left:400.05px;top:622.23px;font-size:15px;color:#333333;font-weight:400;transform:translateX(-100%) scaleX(1.0266666666666668);transform-origin:100% 0;">32</div><div class="t" style="left:519.95px;top:622.23px;font-size:15px;color:#333333;font-weight:400;transform:translateX(-100%) scaleX(1.0266666666666668);transform-origin:100% 0;">38</div><div class="t" style="left:639.85px;top:622.23px;font-size:15px;color:#333333;font-weight:400;transform:translateX(-100%) scaleX(1.0266666666666668);transform-origin:100% 0;">37.5</div><div class="t" style="left:759.75px;top:622.23px;font-size:15px;color:#333333;font-weight:400;transform:translateX(-100%) scaleX(1.0266666666666668);transform-origin:100% 0;">39</div><div class="t" style="left:879.65px;top:622.23px;font-size:15px;color:#333333;font-weight:400;transform:translateX(-100%) scaleX(1.0266666666666668);transform-origin:100% 0;">57.5</div><div class="t" style="left:999.55px;top:622.23px;font-size:15px;color:#333333;font-weight:400;transform:translateX(-100%) scaleX(1.0266666666666668);transform-origin:100% 0;">61.5</div><div class="t" style="left:1119.45px;top:622.23px;font-size:15px;color:#333333;font-weight:400;transform:translateX(-100%) scaleX(1.0266666666666668);transform-origin:100% 0;">68.75</div><div class="t" style="left:1239.35px;top:622.23px;font-size:15px;color:#333333;font-weight:400;transform:translateX(-100%) scaleX(1.0266666666666668);transform-origin:100% 0;">53.5</div><div class="t" style="left:1359.25px;top:622.23px;font-size:15px;color:#333333;font-weight:400;transform:translateX(-100%) scaleX(1.0266666666666668);transform-origin:100% 0;">56.25</div><div class="t" style="left:1479.15px;top:622.23px;font-size:15px;color:#333333;font-weight:400;transform:translateX(-100%) scaleX(1.0266666666666668);transform-origin:100% 0;">57.75</div><div class="t" style="left:280.15px;top:642.08px;font-size:15px;color:#333333;font-weight:400;transform:translateX(-100%) scaleX(1.0406666666666666);transform-origin:100% 0;">35.97911082</div><div class="t" style="left:400.05px;top:642.08px;font-size:15px;color:#333333;font-weight:400;transform:translateX(-100%) scaleX(1.0406666666666666);transform-origin:100% 0;">40.96830702</div><div class="t" style="left:519.95px;top:642.08px;font-size:15px;color:#333333;font-weight:400;transform:translateX(-100%) scaleX(1.0406666666666666);transform-origin:100% 0;">43.30796348</div><div class="t" style="left:639.85px;top:642.08px;font-size:15px;color:#333333;font-weight:400;transform:translateX(-100%) scaleX(1.0406666666666666);transform-origin:100% 0;">44.92932618</div><div class="t" style="left:759.75px;top:642.08px;font-size:15px;color:#333333;font-weight:400;transform:translateX(-100%) scaleX(1.0406666666666666);transform-origin:100% 0;">51.85462194</div><div class="t" style="left:879.65px;top:642.08px;font-size:15px;color:#333333;font-weight:400;transform:translateX(-100%) scaleX(1.0406666666666666);transform-origin:100% 0;">63.88618688</div><div class="t" style="left:999.55px;top:642.08px;font-size:15px;color:#333333;font-weight:400;transform:translateX(-100%) scaleX(1.0406666666666666);transform-origin:100% 0;">74.88166822</div><div class="t" style="left:1119.45px;top:642.08px;font-size:15px;color:#333333;font-weight:400;transform:translateX(-100%) scaleX(1.0406666666666666);transform-origin:100% 0;">79.37709455</div><div class="t" style="left:1239.35px;top:642.08px;font-size:15px;color:#333333;font-weight:400;transform:translateX(-100%) scaleX(1.0406666666666666);transform-origin:100% 0;">65.13741251</div><div class="t" style="left:1359.25px;top:642.08px;font-size:15px;color:#333333;font-weight:400;transform:translateX(-100%) scaleX(1.0406666666666666);transform-origin:100% 0;">61.52490694</div><div class="t" style="left:1472.65px;top:642.93px;font-size:14px;color:#fff;font-weight:700;transform:translateX(-100%) scaleX(1.07);transform-origin:100% 0;">65.50</div><div class="t" style="left:1485.15px;top:642.93px;font-size:14px;color:#000;font-weight:700;transform:scaleX(0.97);transform-origin:0 0;">CPALL</div><div class="t" style="left:1545.72px;top:523.85px;font-size:14px;color:#00b050;font-weight:700;transform:translateX(-50%) scaleX(1.16);transform-origin:50% 0;">#DIV/0!</div><svg class="a" style="left:1482.65px;top:520.8px;" width="7" height="7" viewBox="0 0 7 7"><path d="M0 0 H6.5 L0 6.5 Z" fill="#0f7b0f"/></svg><div class="t" style="left:1545.72px;top:543.7px;font-size:14px;color:#00b050;font-weight:700;transform:translateX(-50%) scaleX(1.16);transform-origin:50% 0;">#DIV/0!</div><svg class="a" style="left:1482.65px;top:540.65px;" width="7" height="7" viewBox="0 0 7 7"><path d="M0 0 H6.5 L0 6.5 Z" fill="#0f7b0f"/></svg><div class="t" style="left:1599.3px;top:563.55px;font-size:14px;color:#00b050;font-weight:700;transform:translateX(-100%) scaleX(1.07);transform-origin:100% 0;">4.55</div><div class="t" style="left:1581.3px;top:583.39px;font-size:14px;color:#00b050;font-weight:700;transform:translateX(-100%) scaleX(1.07);transform-origin:100% 0;">-</div><div class="t" style="left:223.2px;top:681.77px;font-size:15px;color:#333333;font-weight:400;transform:translateX(-50%) scaleX(1.148);transform-origin:50% 0;">#DIV/0!</div><svg class="a" style="left:163.75px;top:679.57px;" width="7" height="7" viewBox="0 0 7 7"><path d="M0 0 H6.5 L0 6.5 Z" fill="#0f7b0f"/></svg><div class="t" style="left:343.1px;top:681.77px;font-size:15px;color:#333333;font-weight:400;transform:translateX(-50%) scaleX(1.148);transform-origin:50% 0;">#DIV/0!</div><svg class="a" style="left:283.65px;top:679.57px;" width="7" height="7" viewBox="0 0 7 7"><path d="M0 0 H6.5 L0 6.5 Z" fill="#0f7b0f"/></svg><div class="t" style="left:463.0px;top:681.77px;font-size:15px;color:#333333;font-weight:400;transform:translateX(-50%) scaleX(1.148);transform-origin:50% 0;">#DIV/0!</div><svg class="a" style="left:403.55px;top:679.57px;" width="7" height="7" viewBox="0 0 7 7"><path d="M0 0 H6.5 L0 6.5 Z" fill="#0f7b0f"/></svg><div class="t" style="left:582.9px;top:681.77px;font-size:15px;color:#333333;font-weight:400;transform:translateX(-50%) scaleX(1.148);transform-origin:50% 0;">#DIV/0!</div><svg class="a" style="left:523.45px;top:679.57px;" width="7" height="7" viewBox="0 0 7 7"><path d="M0 0 H6.5 L0 6.5 Z" fill="#0f7b0f"/></svg><div class="t" style="left:702.8px;top:681.77px;font-size:15px;color:#333333;font-weight:400;transform:translateX(-50%) scaleX(1.148);transform-origin:50% 0;">#DIV/0!</div><svg class="a" style="left:643.35px;top:679.57px;" width="7" height="7" viewBox="0 0 7 7"><path d="M0 0 H6.5 L0 6.5 Z" fill="#0f7b0f"/></svg><div class="t" style="left:822.7px;top:681.77px;font-size:15px;color:#333333;font-weight:400;transform:translateX(-50%) scaleX(1.148);transform-origin:50% 0;">#DIV/0!</div><svg class="a" style="left:763.25px;top:679.57px;" width="7" height="7" viewBox="0 0 7 7"><path d="M0 0 H6.5 L0 6.5 Z" fill="#0f7b0f"/></svg><div class="t" style="left:942.6px;top:681.77px;font-size:15px;color:#333333;font-weight:400;transform:translateX(-50%) scaleX(1.148);transform-origin:50% 0;">#DIV/0!</div><svg class="a" style="left:883.15px;top:679.57px;" width="7" height="7" viewBox="0 0 7 7"><path d="M0 0 H6.5 L0 6.5 Z" fill="#0f7b0f"/></svg><div class="t" style="left:1062.5px;top:681.77px;font-size:15px;color:#333333;font-weight:400;transform:translateX(-50%) scaleX(1.148);transform-origin:50% 0;">#DIV/0!</div><svg class="a" style="left:1003.05px;top:679.57px;" width="7" height="7" viewBox="0 0 7 7"><path d="M0 0 H6.5 L0 6.5 Z" fill="#0f7b0f"/></svg><div class="t" style="left:1182.4px;top:681.77px;font-size:15px;color:#333333;font-weight:400;transform:translateX(-50%) scaleX(1.148);transform-origin:50% 0;">#DIV/0!</div><svg class="a" style="left:1122.95px;top:679.57px;" width="7" height="7" viewBox="0 0 7 7"><path d="M0 0 H6.5 L0 6.5 Z" fill="#0f7b0f"/></svg><div class="t" style="left:1359.25px;top:681.77px;font-size:15px;color:#333333;font-weight:400;transform:translateX(-100%) scaleX(1.148);transform-origin:100% 0;">#DIV/0!</div><svg class="a" style="left:1242.85px;top:679.57px;" width="7" height="7" viewBox="0 0 7 7"><path d="M0 0 H6.5 L0 6.5 Z" fill="#0f7b0f"/></svg><div class="t" style="left:1479.15px;top:681.77px;font-size:15px;color:#333333;font-weight:400;transform:translateX(-100%) scaleX(1.0733333333333333);transform-origin:100% 0;">#VALUE!</div><svg class="a" style="left:1362.75px;top:679.57px;" width="7" height="7" viewBox="0 0 7 7"><path d="M0 0 H6.5 L0 6.5 Z" fill="#0f7b0f"/></svg><div class="t" style="left:1475.15px;top:701.61px;font-size:15px;color:#333333;font-weight:400;transform:translateX(-100%) scaleX(1.0266666666666668);transform-origin:100% 0;">74.98</div><div class="t" style="left:223.2px;top:722.3px;font-size:14px;color:#000;font-weight:700;transform:translateX(-50%) scaleX(1.16);transform-origin:50% 0;">#DIV/0!</div><svg class="a" style="left:163.75px;top:719.25px;" width="7" height="7" viewBox="0 0 7 7"><path d="M0 0 H6.5 L0 6.5 Z" fill="#0f7b0f"/></svg><div class="t" style="left:343.1px;top:722.3px;font-size:14px;color:#000;font-weight:700;transform:translateX(-50%) scaleX(1.16);transform-origin:50% 0;">#DIV/0!</div><svg class="a" style="left:283.65px;top:719.25px;" width="7" height="7" viewBox="0 0 7 7"><path d="M0 0 H6.5 L0 6.5 Z" fill="#0f7b0f"/></svg><div class="t" style="left:463.0px;top:722.3px;font-size:14px;color:#000;font-weight:700;transform:translateX(-50%) scaleX(1.16);transform-origin:50% 0;">#DIV/0!</div><svg class="a" style="left:403.55px;top:719.25px;" width="7" height="7" viewBox="0 0 7 7"><path d="M0 0 H6.5 L0 6.5 Z" fill="#0f7b0f"/></svg><div class="t" style="left:582.9px;top:722.3px;font-size:14px;color:#000;font-weight:700;transform:translateX(-50%) scaleX(1.16);transform-origin:50% 0;">#DIV/0!</div><svg class="a" style="left:523.45px;top:719.25px;" width="7" height="7" viewBox="0 0 7 7"><path d="M0 0 H6.5 L0 6.5 Z" fill="#0f7b0f"/></svg><div class="t" style="left:702.8px;top:722.3px;font-size:14px;color:#000;font-weight:700;transform:translateX(-50%) scaleX(1.16);transform-origin:50% 0;">#DIV/0!</div><svg class="a" style="left:643.35px;top:719.25px;" width="7" height="7" viewBox="0 0 7 7"><path d="M0 0 H6.5 L0 6.5 Z" fill="#0f7b0f"/></svg><div class="t" style="left:822.7px;top:722.3px;font-size:14px;color:#000;font-weight:700;transform:translateX(-50%) scaleX(1.16);transform-origin:50% 0;">#DIV/0!</div><svg class="a" style="left:763.25px;top:719.25px;" width="7" height="7" viewBox="0 0 7 7"><path d="M0 0 H6.5 L0 6.5 Z" fill="#0f7b0f"/></svg><div class="t" style="left:942.6px;top:722.3px;font-size:14px;color:#000;font-weight:700;transform:translateX(-50%) scaleX(1.16);transform-origin:50% 0;">#DIV/0!</div><svg class="a" style="left:883.15px;top:719.25px;" width="7" height="7" viewBox="0 0 7 7"><path d="M0 0 H6.5 L0 6.5 Z" fill="#0f7b0f"/></svg><div class="t" style="left:1062.5px;top:722.3px;font-size:14px;color:#000;font-weight:700;transform:translateX(-50%) scaleX(1.16);transform-origin:50% 0;">#DIV/0!</div><svg class="a" style="left:1003.05px;top:719.25px;" width="7" height="7" viewBox="0 0 7 7"><path d="M0 0 H6.5 L0 6.5 Z" fill="#0f7b0f"/></svg><div class="t" style="left:1182.4px;top:722.3px;font-size:14px;color:#000;font-weight:700;transform:translateX(-50%) scaleX(1.16);transform-origin:50% 0;">#DIV/0!</div><svg class="a" style="left:1122.95px;top:719.25px;" width="7" height="7" viewBox="0 0 7 7"><path d="M0 0 H6.5 L0 6.5 Z" fill="#0f7b0f"/></svg><div class="t" style="left:1359.25px;top:722.3px;font-size:14px;color:#000;font-weight:700;transform:translateX(-100%) scaleX(1.16);transform-origin:100% 0;">#DIV/0!</div><svg class="a" style="left:1242.85px;top:719.25px;" width="7" height="7" viewBox="0 0 7 7"><path d="M0 0 H6.5 L0 6.5 Z" fill="#0f7b0f"/></svg><div class="t" style="left:1479.15px;top:722.3px;font-size:14px;color:#000;font-weight:700;transform:translateX(-100%) scaleX(1.16);transform-origin:100% 0;">#DIV/0!</div><svg class="a" style="left:1362.75px;top:719.25px;" width="7" height="7" viewBox="0 0 7 7"><path d="M0 0 H6.5 L0 6.5 Z" fill="#0f7b0f"/></svg><div class="t" style="left:223.2px;top:742.15px;font-size:14px;color:#000;font-weight:700;transform:translateX(-50%) scaleX(1.16);transform-origin:50% 0;">#DIV/0!</div><svg class="a" style="left:163.75px;top:739.1px;" width="7" height="7" viewBox="0 0 7 7"><path d="M0 0 H6.5 L0 6.5 Z" fill="#0f7b0f"/></svg><div class="t" style="left:343.1px;top:742.15px;font-size:14px;color:#000;font-weight:700;transform:translateX(-50%) scaleX(1.16);transform-origin:50% 0;">#DIV/0!</div><svg class="a" style="left:283.65px;top:739.1px;" width="7" height="7" viewBox="0 0 7 7"><path d="M0 0 H6.5 L0 6.5 Z" fill="#0f7b0f"/></svg><div class="t" style="left:463.0px;top:742.15px;font-size:14px;color:#000;font-weight:700;transform:translateX(-50%) scaleX(1.16);transform-origin:50% 0;">#DIV/0!</div><svg class="a" style="left:403.55px;top:739.1px;" width="7" height="7" viewBox="0 0 7 7"><path d="M0 0 H6.5 L0 6.5 Z" fill="#0f7b0f"/></svg><div class="t" style="left:582.9px;top:742.15px;font-size:14px;color:#000;font-weight:700;transform:translateX(-50%) scaleX(1.16);transform-origin:50% 0;">#DIV/0!</div><svg class="a" style="left:523.45px;top:739.1px;" width="7" height="7" viewBox="0 0 7 7"><path d="M0 0 H6.5 L0 6.5 Z" fill="#0f7b0f"/></svg><div class="t" style="left:702.8px;top:742.15px;font-size:14px;color:#000;font-weight:700;transform:translateX(-50%) scaleX(1.16);transform-origin:50% 0;">#DIV/0!</div><svg class="a" style="left:643.35px;top:739.1px;" width="7" height="7" viewBox="0 0 7 7"><path d="M0 0 H6.5 L0 6.5 Z" fill="#0f7b0f"/></svg><div class="t" style="left:822.7px;top:742.15px;font-size:14px;color:#000;font-weight:700;transform:translateX(-50%) scaleX(1.16);transform-origin:50% 0;">#DIV/0!</div><svg class="a" style="left:763.25px;top:739.1px;" width="7" height="7" viewBox="0 0 7 7"><path d="M0 0 H6.5 L0 6.5 Z" fill="#0f7b0f"/></svg><div class="t" style="left:942.6px;top:742.15px;font-size:14px;color:#000;font-weight:700;transform:translateX(-50%) scaleX(1.16);transform-origin:50% 0;">#DIV/0!</div><svg class="a" style="left:883.15px;top:739.1px;" width="7" height="7" viewBox="0 0 7 7"><path d="M0 0 H6.5 L0 6.5 Z" fill="#0f7b0f"/></svg><div class="t" style="left:1062.5px;top:742.15px;font-size:14px;color:#000;font-weight:700;transform:translateX(-50%) scaleX(1.16);transform-origin:50% 0;">#DIV/0!</div><svg class="a" style="left:1003.05px;top:739.1px;" width="7" height="7" viewBox="0 0 7 7"><path d="M0 0 H6.5 L0 6.5 Z" fill="#0f7b0f"/></svg><div class="t" style="left:1182.4px;top:742.15px;font-size:14px;color:#000;font-weight:700;transform:translateX(-50%) scaleX(1.16);transform-origin:50% 0;">#DIV/0!</div><svg class="a" style="left:1122.95px;top:739.1px;" width="7" height="7" viewBox="0 0 7 7"><path d="M0 0 H6.5 L0 6.5 Z" fill="#0f7b0f"/></svg><div class="t" style="left:1359.25px;top:742.15px;font-size:14px;color:#000;font-weight:700;transform:translateX(-100%) scaleX(1.16);transform-origin:100% 0;">#DIV/0!</div><svg class="a" style="left:1242.85px;top:739.1px;" width="7" height="7" viewBox="0 0 7 7"><path d="M0 0 H6.5 L0 6.5 Z" fill="#0f7b0f"/></svg><div class="t" style="left:1479.15px;top:742.15px;font-size:14px;color:#000;font-weight:700;transform:translateX(-100%) scaleX(1.16);transform-origin:100% 0;">#DIV/0!</div><svg class="a" style="left:1362.75px;top:739.1px;" width="7" height="7" viewBox="0 0 7 7"><path d="M0 0 H6.5 L0 6.5 Z" fill="#0f7b0f"/></svg><div class="t" style="left:280.15px;top:761.99px;font-size:14px;color:#000;font-weight:700;transform:translateX(-100%) scaleX(1.06);transform-origin:100% 0;">146%</div><div class="t" style="left:400.05px;top:761.99px;font-size:14px;color:#000;font-weight:700;transform:translateX(-100%) scaleX(1.06);transform-origin:100% 0;">-77%</div><div class="t" style="left:519.95px;top:761.99px;font-size:14px;color:#000;font-weight:700;transform:translateX(-100%) scaleX(1.06);transform-origin:100% 0;">-48%</div><div class="t" style="left:639.85px;top:761.99px;font-size:14px;color:#000;font-weight:700;transform:translateX(-100%) scaleX(1.06);transform-origin:100% 0;">-12%</div><div class="t" style="left:759.75px;top:761.99px;font-size:14px;color:#000;font-weight:700;transform:translateX(-100%) scaleX(1.06);transform-origin:100% 0;">8%</div><div class="t" style="left:879.65px;top:761.99px;font-size:14px;color:#000;font-weight:700;transform:translateX(-100%) scaleX(1.06);transform-origin:100% 0;">27%</div><div class="t" style="left:999.55px;top:761.99px;font-size:14px;color:#000;font-weight:700;transform:translateX(-100%) scaleX(1.06);transform-origin:100% 0;">39%</div><div class="t" style="left:1119.45px;top:761.99px;font-size:14px;color:#000;font-weight:700;transform:translateX(-100%) scaleX(1.06);transform-origin:100% 0;">43%</div><div class="t" style="left:1239.35px;top:761.99px;font-size:14px;color:#000;font-weight:700;transform:translateX(-100%) scaleX(1.06);transform-origin:100% 0;">8%</div><div class="t" style="left:1359.25px;top:761.99px;font-size:14px;color:#000;font-weight:700;transform:translateX(-100%) scaleX(1.06);transform-origin:100% 0;">-22%</div><div class="t" style="left:1479.15px;top:761.99px;font-size:14px;color:#000;font-weight:700;transform:translateX(-100%) scaleX(1.02);transform-origin:100% 0;">#VALUE!</div><svg class="a" style="left:1362.75px;top:758.94px;" width="7" height="7" viewBox="0 0 7 7"><path d="M0 0 H6.5 L0 6.5 Z" fill="#0f7b0f"/></svg><div class="t" style="left:223.2px;top:781.84px;font-size:14px;color:#000;font-weight:700;transform:translateX(-50%) scaleX(1.16);transform-origin:50% 0;">#DIV/0!</div><svg class="a" style="left:163.75px;top:778.79px;" width="7" height="7" viewBox="0 0 7 7"><path d="M0 0 H6.5 L0 6.5 Z" fill="#0f7b0f"/></svg><div class="t" style="left:343.1px;top:781.84px;font-size:14px;color:#000;font-weight:700;transform:translateX(-50%) scaleX(1.16);transform-origin:50% 0;">#DIV/0!</div><svg class="a" style="left:283.65px;top:778.79px;" width="7" height="7" viewBox="0 0 7 7"><path d="M0 0 H6.5 L0 6.5 Z" fill="#0f7b0f"/></svg><div class="t" style="left:463.0px;top:781.84px;font-size:14px;color:#000;font-weight:700;transform:translateX(-50%) scaleX(1.16);transform-origin:50% 0;">#DIV/0!</div><svg class="a" style="left:403.55px;top:778.79px;" width="7" height="7" viewBox="0 0 7 7"><path d="M0 0 H6.5 L0 6.5 Z" fill="#0f7b0f"/></svg><div class="t" style="left:582.9px;top:781.84px;font-size:14px;color:#000;font-weight:700;transform:translateX(-50%) scaleX(1.16);transform-origin:50% 0;">#DIV/0!</div><svg class="a" style="left:523.45px;top:778.79px;" width="7" height="7" viewBox="0 0 7 7"><path d="M0 0 H6.5 L0 6.5 Z" fill="#0f7b0f"/></svg><div class="t" style="left:702.8px;top:781.84px;font-size:14px;color:#000;font-weight:700;transform:translateX(-50%) scaleX(1.16);transform-origin:50% 0;">#DIV/0!</div><svg class="a" style="left:643.35px;top:778.79px;" width="7" height="7" viewBox="0 0 7 7"><path d="M0 0 H6.5 L0 6.5 Z" fill="#0f7b0f"/></svg><div class="t" style="left:822.7px;top:781.84px;font-size:14px;color:#000;font-weight:700;transform:translateX(-50%) scaleX(1.16);transform-origin:50% 0;">#DIV/0!</div><svg class="a" style="left:763.25px;top:778.79px;" width="7" height="7" viewBox="0 0 7 7"><path d="M0 0 H6.5 L0 6.5 Z" fill="#0f7b0f"/></svg><div class="t" style="left:942.6px;top:781.84px;font-size:14px;color:#000;font-weight:700;transform:translateX(-50%) scaleX(1.16);transform-origin:50% 0;">#DIV/0!</div><svg class="a" style="left:883.15px;top:778.79px;" width="7" height="7" viewBox="0 0 7 7"><path d="M0 0 H6.5 L0 6.5 Z" fill="#0f7b0f"/></svg><div class="t" style="left:1062.5px;top:781.84px;font-size:14px;color:#000;font-weight:700;transform:translateX(-50%) scaleX(1.16);transform-origin:50% 0;">#DIV/0!</div><svg class="a" style="left:1003.05px;top:778.79px;" width="7" height="7" viewBox="0 0 7 7"><path d="M0 0 H6.5 L0 6.5 Z" fill="#0f7b0f"/></svg><div class="t" style="left:1182.4px;top:781.84px;font-size:14px;color:#000;font-weight:700;transform:translateX(-50%) scaleX(1.16);transform-origin:50% 0;">#DIV/0!</div><svg class="a" style="left:1122.95px;top:778.79px;" width="7" height="7" viewBox="0 0 7 7"><path d="M0 0 H6.5 L0 6.5 Z" fill="#0f7b0f"/></svg><div class="t" style="left:1359.25px;top:781.84px;font-size:14px;color:#000;font-weight:700;transform:translateX(-100%) scaleX(1.16);transform-origin:100% 0;">#DIV/0!</div><svg class="a" style="left:1242.85px;top:778.79px;" width="7" height="7" viewBox="0 0 7 7"><path d="M0 0 H6.5 L0 6.5 Z" fill="#0f7b0f"/></svg><div class="t" style="left:1479.15px;top:781.84px;font-size:14px;color:#000;font-weight:700;transform:translateX(-100%) scaleX(1.02);transform-origin:100% 0;">#VALUE!</div><svg class="a" style="left:1362.75px;top:778.79px;" width="7" height="7" viewBox="0 0 7 7"><path d="M0 0 H6.5 L0 6.5 Z" fill="#0f7b0f"/></svg><div class="t" style="left:1359.25px;top:800.83px;font-size:15px;color:#333333;font-weight:400;transform:translateX(-100%) scaleX(0.9893333333333333);transform-origin:100% 0;">-100%</div><div class="t" style="left:1479.15px;top:800.83px;font-size:15px;color:#333333;font-weight:400;transform:translateX(-100%) scaleX(0.9893333333333333);transform-origin:100% 0;">14%</div><div class="t" style="left:223.2px;top:820.68px;font-size:15px;color:#333333;font-weight:400;transform:translateX(-50%) scaleX(1.148);transform-origin:50% 0;">#DIV/0!</div><svg class="a" style="left:163.75px;top:818.48px;" width="7" height="7" viewBox="0 0 7 7"><path d="M0 0 H6.5 L0 6.5 Z" fill="#0f7b0f"/></svg><div class="t" style="left:343.1px;top:820.68px;font-size:15px;color:#333333;font-weight:400;transform:translateX(-50%) scaleX(1.148);transform-origin:50% 0;">#DIV/0!</div><svg class="a" style="left:283.65px;top:818.48px;" width="7" height="7" viewBox="0 0 7 7"><path d="M0 0 H6.5 L0 6.5 Z" fill="#0f7b0f"/></svg><div class="t" style="left:463.0px;top:820.68px;font-size:15px;color:#333333;font-weight:400;transform:translateX(-50%) scaleX(1.148);transform-origin:50% 0;">#DIV/0!</div><svg class="a" style="left:403.55px;top:818.48px;" width="7" height="7" viewBox="0 0 7 7"><path d="M0 0 H6.5 L0 6.5 Z" fill="#0f7b0f"/></svg><div class="t" style="left:582.9px;top:820.68px;font-size:15px;color:#333333;font-weight:400;transform:translateX(-50%) scaleX(1.148);transform-origin:50% 0;">#DIV/0!</div><svg class="a" style="left:523.45px;top:818.48px;" width="7" height="7" viewBox="0 0 7 7"><path d="M0 0 H6.5 L0 6.5 Z" fill="#0f7b0f"/></svg><div class="t" style="left:702.8px;top:821.53px;font-size:14px;color:#000;font-weight:700;transform:translateX(-50%) scaleX(1.16);transform-origin:50% 0;">#DIV/0!</div><svg class="a" style="left:643.35px;top:818.48px;" width="7" height="7" viewBox="0 0 7 7"><path d="M0 0 H6.5 L0 6.5 Z" fill="#0f7b0f"/></svg><div class="t" style="left:822.7px;top:821.53px;font-size:14px;color:#000;font-weight:700;transform:translateX(-50%) scaleX(1.16);transform-origin:50% 0;">#DIV/0!</div><svg class="a" style="left:763.25px;top:818.48px;" width="7" height="7" viewBox="0 0 7 7"><path d="M0 0 H6.5 L0 6.5 Z" fill="#0f7b0f"/></svg><div class="t" style="left:942.6px;top:821.53px;font-size:14px;color:#000;font-weight:700;transform:translateX(-50%) scaleX(1.16);transform-origin:50% 0;">#DIV/0!</div><svg class="a" style="left:883.15px;top:818.48px;" width="7" height="7" viewBox="0 0 7 7"><path d="M0 0 H6.5 L0 6.5 Z" fill="#0f7b0f"/></svg><div class="t" style="left:1062.5px;top:821.53px;font-size:14px;color:#000;font-weight:700;transform:translateX(-50%) scaleX(1.16);transform-origin:50% 0;">#DIV/0!</div><svg class="a" style="left:1003.05px;top:818.48px;" width="7" height="7" viewBox="0 0 7 7"><path d="M0 0 H6.5 L0 6.5 Z" fill="#0f7b0f"/></svg><div class="t" style="left:1182.4px;top:821.53px;font-size:14px;color:#000;font-weight:700;transform:translateX(-50%) scaleX(1.16);transform-origin:50% 0;">#DIV/0!</div><svg class="a" style="left:1122.95px;top:818.48px;" width="7" height="7" viewBox="0 0 7 7"><path d="M0 0 H6.5 L0 6.5 Z" fill="#0f7b0f"/></svg><div class="t" style="left:1359.25px;top:821.53px;font-size:14px;color:#000;font-weight:700;transform:translateX(-100%) scaleX(1.16);transform-origin:100% 0;">#DIV/0!</div><svg class="a" style="left:1242.85px;top:818.48px;" width="7" height="7" viewBox="0 0 7 7"><path d="M0 0 H6.5 L0 6.5 Z" fill="#0f7b0f"/></svg><div class="t" style="left:1479.15px;top:821.53px;font-size:14px;color:#000;font-weight:700;transform:translateX(-100%) scaleX(1.16);transform-origin:100% 0;">#DIV/0!</div><svg class="a" style="left:1362.75px;top:818.48px;" width="7" height="7" viewBox="0 0 7 7"><path d="M0 0 H6.5 L0 6.5 Z" fill="#0f7b0f"/></svg><div class="t" style="left:273.65px;top:861.22px;font-size:14px;color:#000;font-weight:700;transform:translateX(-100%) scaleX(1.07);transform-origin:100% 0;">2.65</div><div class="t" style="left:393.55px;top:861.22px;font-size:14px;color:#000;font-weight:700;transform:translateX(-100%) scaleX(1.07);transform-origin:100% 0;">3.55</div><div class="t" style="left:513.45px;top:861.22px;font-size:14px;color:#000;font-weight:700;transform:translateX(-100%) scaleX(1.07);transform-origin:100% 0;">4.45</div><div class="t" style="left:633.35px;top:861.22px;font-size:14px;color:#000;font-weight:700;transform:translateX(-100%) scaleX(1.07);transform-origin:100% 0;">5.25</div><div class="t" style="left:753.25px;top:861.22px;font-size:14px;color:#000;font-weight:700;transform:translateX(-100%) scaleX(1.07);transform-origin:100% 0;">6.15</div><div class="t" style="left:873.15px;top:861.22px;font-size:14px;color:#000;font-weight:700;transform:translateX(-100%) scaleX(1.07);transform-origin:100% 0;">7.15</div><div class="t" style="left:993.05px;top:861.22px;font-size:14px;color:#000;font-weight:700;transform:translateX(-100%) scaleX(1.07);transform-origin:100% 0;">8.25</div><div class="t" style="left:1112.95px;top:861.22px;font-size:14px;color:#000;font-weight:700;transform:translateX(-100%) scaleX(1.07);transform-origin:100% 0;">8.25</div><div class="t" style="left:1232.85px;top:861.22px;font-size:14px;color:#000;font-weight:700;transform:translateX(-100%) scaleX(1.07);transform-origin:100% 0;">9.45</div><div class="t" style="left:1352.75px;top:861.22px;font-size:14px;color:#000;font-weight:700;transform:translateX(-100%) scaleX(1.07);transform-origin:100% 0;">10.35</div><div class="t" style="left:1472.65px;top:861.22px;font-size:14px;color:#000;font-weight:700;transform:translateX(-100%) scaleX(1.07);transform-origin:100% 0;">10.95</div><div class="t" style="left:273.65px;top:881.06px;font-size:14px;color:#000;font-weight:700;transform:translateX(-100%) scaleX(1.07);transform-origin:100% 0;">38.63</div><div class="t" style="left:393.55px;top:881.06px;font-size:14px;color:#000;font-weight:700;transform:translateX(-100%) scaleX(1.07);transform-origin:100% 0;">44.52</div><div class="t" style="left:513.45px;top:881.06px;font-size:14px;color:#000;font-weight:700;transform:translateX(-100%) scaleX(1.07);transform-origin:100% 0;">47.76</div><div class="t" style="left:633.35px;top:881.06px;font-size:14px;color:#000;font-weight:700;transform:translateX(-100%) scaleX(1.07);transform-origin:100% 0;">50.18</div><div class="t" style="left:753.25px;top:881.06px;font-size:14px;color:#000;font-weight:700;transform:translateX(-100%) scaleX(1.07);transform-origin:100% 0;">58.00</div><div class="t" style="left:873.15px;top:881.06px;font-size:14px;color:#000;font-weight:700;transform:translateX(-100%) scaleX(1.07);transform-origin:100% 0;">71.04</div><div class="t" style="left:993.05px;top:881.06px;font-size:14px;color:#000;font-weight:700;transform:translateX(-100%) scaleX(1.07);transform-origin:100% 0;">83.13</div><div class="t" style="left:1112.95px;top:881.06px;font-size:14px;color:#000;font-weight:700;transform:translateX(-100%) scaleX(1.07);transform-origin:100% 0;">87.63</div><div class="t" style="left:1232.85px;top:881.06px;font-size:14px;color:#000;font-weight:700;transform:translateX(-100%) scaleX(1.07);transform-origin:100% 0;">74.59</div><div class="t" style="left:1352.75px;top:881.06px;font-size:14px;color:#000;font-weight:700;transform:translateX(-100%) scaleX(1.07);transform-origin:100% 0;">71.87</div><div class="t" style="left:1472.65px;top:881.06px;font-size:14px;color:#000;font-weight:700;transform:translateX(-100%) scaleX(1.07);transform-origin:100% 0;">76.45</div><div class="t" style="left:1479.15px;top:900.91px;font-size:14px;color:#00b050;font-weight:700;transform:translateX(-100%) scaleX(1.06);transform-origin:100% 0;">1356.4%</div><div class="t" style="left:519px;top:345.25px;font-size:14px;color:#fff;font-weight:700;transform:translateX(-50%) scaleX(1.113);transform-origin:50% 0;">Market Ratio</div><div class="t" style="left:519px;top:662.77px;font-size:14px;color:#fff;font-weight:700;transform:translateX(-50%) scaleX(1.1);transform-origin:50% 0;">Valuation</div><div class="t" style="left:519px;top:841.38px;font-size:14px;color:#fff;font-weight:700;transform:translateX(-50%) scaleX(1.1);transform-origin:50% 0;">Backtesting</div><div class="a" style="left:1609.3px;top:341.7px;width:156.20000000000005px;height:579.3px;overflow:hidden"><div class="t" style="left:9.4px;top:22.54px;font-size:15px;color:#333333;font-weight:400;transform:scaleX(1.1013333333333333);transform-origin:0 0">Common Shares</div><div class="t" style="left:9.4px;top:42.39px;font-size:15px;color:#333333;font-weight:400;transform:scaleX(1.1181333333333332);transform-origin:0 0">Book Value / Share</div><div class="t" style="left:9.4px;top:62.24px;font-size:15px;color:#333333;font-weight:400;transform:scaleX(0.8026666666666666);transform-origin:0 0">EPS</div><div class="t" style="left:3.1px;top:82.08px;font-size:15px;color:#333333;font-weight:400;transform:scaleX(1.0369333333333333);transform-origin:0 0">EPS Growth</div><div class="t" style="left:9.4px;top:101.92px;font-size:15px;color:#333333;font-weight:400;transform:scaleX(1.0957333333333332);transform-origin:0 0">Dividend per Share</div><div class="t" style="left:3.1px;top:121.77px;font-size:15px;color:#333333;font-weight:400;transform:scaleX(1.1041333333333334);transform-origin:0 0">Dividend Yield</div><div class="t" style="left:3.1px;top:141.62px;font-size:15px;color:#333333;font-weight:400;transform:scaleX(1.1013333333333333);transform-origin:0 0">Dividend Payout Rat</div><div class="t" style="left:9.4px;top:161.46px;font-size:15px;color:#333333;font-weight:400;transform:scaleX(1.1610666666666667);transform-origin:0 0">Market Cap</div><div class="t" style="left:9.4px;top:182.15px;font-size:14px;color:#000;font-weight:700;transform:scaleX(1.01);transform-origin:0 0">P/BV</div><div class="t" style="left:9.4px;top:202.0px;font-size:14px;color:#000;font-weight:700;transform:scaleX(0.9880000000000001);transform-origin:0 0">P/E</div><div class="t" style="left:9.4px;top:221.85px;font-size:14px;color:#000;font-weight:700;transform:scaleX(0.981);transform-origin:0 0">EV/EBITDA</div><div class="t" style="left:9.4px;top:241.69px;font-size:14px;color:#000;font-weight:700;transform:scaleX(0.9880000000000001);transform-origin:0 0">P/S</div><div class="t" style="left:9.4px;top:261.53px;font-size:14px;color:#00b050;font-weight:700;transform:scaleX(1.121);transform-origin:0 0">Max Price</div><div class="t" style="left:9.4px;top:281.38px;font-size:14px;color:#ff0000;font-weight:700;transform:scaleX(1.081);transform-origin:0 0">Min Price</div><div class="t" style="left:9.4px;top:301.23px;font-size:14px;color:#000;font-weight:700;transform:scaleX(1.057);transform-origin:0 0">Price</div><div class="t" style="left:9.4px;top:340.07px;font-size:15px;color:#333333;font-weight:400;transform:scaleX(1.0416);transform-origin:0 0">PEG Ratio</div><div class="t" style="left:9.4px;top:359.91px;font-size:15px;color:#333333;font-weight:400;transform:scaleX(0.9473333333333332);transform-origin:0 0">CONSENSUS</div><div class="t" style="left:3.1px;top:380.6px;font-size:14px;color:#000;font-weight:700;transform:scaleX(1.06);transform-origin:0 0">P/BV MOS</div><div class="t" style="left:3.1px;top:400.45px;font-size:14px;color:#000;font-weight:700;transform:scaleX(1.054);transform-origin:0 0">P/E MOS</div><div class="t" style="left:3.1px;top:420.29px;font-size:14px;color:#000;font-weight:700;transform:scaleX(1.026);transform-origin:0 0">EV/EBITDA MOS</div><div class="t" style="left:3.1px;top:440.14px;font-size:14px;color:#000;font-weight:700;transform:scaleX(1.054);transform-origin:0 0">P/S MOS</div><div class="t" style="left:3.1px;top:459.13px;font-size:15px;color:#333333;font-weight:400;transform:scaleX(0.9818666666666668);transform-origin:0 0">CONSENSUS MOS</div><div class="t" style="left:3.1px;top:479.83px;font-size:14px;color:#000;font-weight:700;transform:scaleX(1.035);transform-origin:0 0">AVERAGE MOS</div><div class="t" style="left:9.4px;top:519.52px;font-size:14px;color:#000;font-weight:700;transform:scaleX(1.09);transform-origin:0 0">DPS Consecutive</div><div class="t" style="left:9.4px;top:539.36px;font-size:14px;color:#000;font-weight:700;transform:scaleX(1.053);transform-origin:0 0">Total Return</div><div class="t" style="left:9.4px;top:559.21px;font-size:14px;color:#00b050;font-weight:700;transform:scaleX(1.052);transform-origin:0 0">%Total Return</div></div><div class="a" style="left:132px;top:921px;width:1634px;height:1px;background:#c8c8c8;"></div><div class="a" style="left:132px;top:922px;width:1656px;height:23px;background:#f4f4f4;"></div><svg class="a" style="left:153px;top:928px;" width="9" height="11" viewBox="0 0 9 11"><path d="M8 0.5 V10.5 L1 5.5 Z" fill="#c8c8c8"/></svg><svg class="a" style="left:179px;top:928px;" width="9" height="11" viewBox="0 0 9 11"><path d="M1 0.5 V10.5 L8 5.5 Z" fill="#217346"/></svg><div class="a" style="left:221.5px;top:925px;width:1px;height:17px;background:#c6c6c6;"></div><div class="a" style="left:223px;top:923.3px;width:143px;height:19.8px;background:#ff0000;"></div><div class="t" style="left:234.8px;top:924.35px;font-size:14px;color:#fff;font-weight:400;transform:scaleX(1.06);transform-origin:0 0;">Form - Normal (3)</div><div class="a" style="left:367.5px;top:922px;width:148px;height:21px;background:linear-gradient(180deg,#ffffff 0%,#fde6e6 45%,#f4a9a9 100%);"></div><div class="a" style="left:366.5px;top:922px;width:1px;height:21px;background:#c6c6c6;"></div><div class="a" style="left:515px;top:922px;width:1px;height:21px;background:#c6c6c6;"></div><div class="a" style="left:367.5px;top:941.5px;width:148px;height:2.2px;background:#217346;"></div><div class="t" style="left:378.8px;top:924.35px;font-size:14px;color:#217346;font-weight:400;transform:scaleX(1.12);transform-origin:0 0;-webkit-text-stroke:0.35px #217346;">Form - Normal (2)</div><div class="a" style="left:516.5px;top:923.3px;width:51.5px;height:19.8px;background:#92d050;"></div><div class="t" style="left:525.5px;top:924.35px;font-size:14px;color:#1b1b1b;font-weight:400;transform:scaleX(0.97);transform-origin:0 0;">Price</div><div class="a" style="left:568.5px;top:925px;width:1px;height:17px;background:#c6c6c6;"></div><div class="a" style="left:571px;top:923.3px;width:87.5px;height:19.8px;background:#92d050;"></div><div class="t" style="left:579px;top:924.35px;font-size:14px;color:#1b1b1b;font-weight:400;transform:scaleX(1.02);transform-origin:0 0;">Concensus</div><div class="a" style="left:660px;top:925px;width:1px;height:17px;background:#c6c6c6;"></div><div class="a" style="left:662.5px;top:923.3px;width:118.5px;height:19.8px;background:#ff0000;"></div><div class="t" style="left:672.7px;top:924.35px;font-size:14px;color:#fff;font-weight:400;transform:scaleX(1.07);transform-origin:0 0;">Form - Normal</div><div class="a" style="left:783.5px;top:925px;width:1px;height:17px;background:#c6c6c6;"></div><div class="a" style="left:785.5px;top:923.3px;width:127.5px;height:19.8px;background:#00b0f0;"></div><div class="t" style="left:796px;top:924.35px;font-size:14px;color:#1b1b3a;font-weight:400;transform:scaleX(1.05);transform-origin:0 0;">Form - Financial</div><div class="a" style="left:915.5px;top:925px;width:1px;height:17px;background:#c6c6c6;"></div><div class="a" style="left:917.7px;top:923.3px;width:60.5px;height:19.8px;background:#ff0000;"></div><div class="t" style="left:926.4px;top:924.35px;font-size:14px;color:#fff;font-weight:400;transform:scaleX(0.98);transform-origin:0 0;">CPALL</div><div class="a" style="left:980.2px;top:925px;width:1px;height:17px;background:#c6c6c6;"></div><div class="a" style="left:982.5px;top:923.3px;width:70.5px;height:19.8px;background:#ff0000;"></div><div class="t" style="left:992.2px;top:924.35px;font-size:14px;color:#fff;font-weight:400;">MAKRO</div><div class="a" style="left:1055.5px;top:925px;width:1px;height:17px;background:#c6c6c6;"></div><div class="a" style="left:1057.3px;top:923.3px;width:4.3px;height:19.2px;background:#00b0f0;"></div><div class="t" style="left:1067.5px;top:926.5px;font-size:13px;color:#217346;font-weight:700;">...</div><svg class="a" style="left:1089px;top:924px;" width="19" height="19" viewBox="0 0 19 19"><circle cx="9.5" cy="9.5" r="8.3" stroke="#555" stroke-width="1.2" fill="none"/><path d="M9.5 4.5 V14.5 M4.5 9.5 H14.5" stroke="#555" stroke-width="1.2"/></svg><div class="a" style="left:1112px;top:922px;width:25px;height:22px;background:#e6e6e6;"></div><svg class="a" style="left:1122px;top:926px;" width="4" height="15" viewBox="0 0 4 15"><circle cx="2" cy="2" r="1" fill="#999"/><circle cx="2" cy="7.5" r="1" fill="#999"/><circle cx="2" cy="13" r="1" fill="#999"/></svg><svg class="a" style="left:1140px;top:928px;" width="10" height="11" viewBox="0 0 10 11"><path d="M9 0.5 V10.5 L1 5.5 Z" fill="#606060"/></svg><div class="a" style="left:1179.7px;top:928.6px;width:70px;height:9px;background:#8a8a8a;border-radius:4.5px"></div><svg class="a" style="left:1754px;top:928px;" width="10" height="11" viewBox="0 0 10 11"><path d="M1 0.5 V10.5 L9 5.5 Z" fill="#606060"/></svg><div class="a" style="left:1766px;top:321.4px;width:22px;height:600px;background:#efefef;"></div><svg class="a" style="left:1770px;top:325px;" width="14" height="10" viewBox="0 0 14 10"><path d="M1 8.5 L7 1.5 L13 8.5 Z" fill="#606060"/></svg><div class="a" style="left:1772.6px;top:840px;width:9.2px;height:20.7px;background:#8a8a8a;border-radius:4.6px"></div><svg class="a" style="left:1770px;top:909px;" width="14" height="10" viewBox="0 0 14 10"><path d="M1 1.5 L7 8.5 L13 1.5 Z" fill="#606060"/></svg><div class="a" style="left:132px;top:945.5px;width:1656px;height:23.5px;background:#f3f3f3;"></div><div class="a" style="left:132px;top:945px;width:1656px;height:1px;background:#fafafa;"></div><div class="t" style="left:139.8px;top:952.57px;font-size:11.5px;color:#3a3a3a;font-weight:400;transform:scaleX(0.94);transform-origin:0 0;">Ready</div><svg class="a" style="left:191px;top:951px;" width="18" height="15" viewBox="0 0 18 15"><rect x="0.7" y="0.7" width="15" height="12" stroke="#555" stroke-width="1.2" fill="none"/><path d="M0.7 3.5 H15.7 M3 6 H7 M3 8.5 H6 M3 11 H6" stroke="#555" stroke-width="1"/><circle cx="11.5" cy="10" r="4" stroke="#555" stroke-width="1.2" fill="#f3f3f3"/><circle cx="11.5" cy="10" r="1.8" fill="#333"/></svg><svg class="a" style="left:226px;top:950px;" width="17" height="17" viewBox="0 0 17 17"><circle cx="7" cy="2.5" r="1.8" stroke="#555" stroke-width="1.1" fill="none"/><path d="M1 5.5 Q7 7.5 13 5.5 M7 6.5 V11 L4 16 M7 11 L9 13" stroke="#555" stroke-width="1.2" fill="none"/><path d="M10 11 L16 16.5 M16 11 L10 16.5" stroke="#555" stroke-width="1.1"/></svg><div class="t" style="left:246px;top:952.57px;font-size:11.5px;color:#3a3a3a;font-weight:400;transform:scaleX(0.95);transform-origin:0 0;">Accessibility: Investigate</div><div class="a" style="left:1466.8px;top:944.5px;width:43.2px;height:24.5px;background:#dcdcdc;"></div><svg class="a" style="left:1479px;top:949px;" width="18" height="14" viewBox="0 0 18 14"><path d="M0.6 0.6 H17.4 V13.4 H0.6 Z M0.6 4.8 H17.4 M0.6 9.1 H17.4 M4.8 0.6 V13.4 M9 0.6 V13.4 M13.2 0.6 V13.4" stroke="#444" stroke-width="1.1" fill="none"/></svg><svg class="a" style="left:1522px;top:949px;" width="18" height="14" viewBox="0 0 18 14"><rect x="0.6" y="0.6" width="16.8" height="12.8" stroke="#666" stroke-width="1.1" fill="none"/><rect x="4" y="3" width="10" height="8" stroke="#666" stroke-width="1" fill="none"/></svg><svg class="a" style="left:1565px;top:949px;" width="18" height="14" viewBox="0 0 18 14"><rect x="0.6" y="0.6" width="16.8" height="12.8" stroke="#666" stroke-width="1.1" fill="none"/><path d="M6 0.6 V13.4 M12 0.6 V13.4 M0.6 7 H6" stroke="#666" stroke-width="1"/></svg><div class="a" style="left:1602px;top:957px;width:8px;height:1.2px;background:#555;"></div><div class="a" style="left:1616px;top:957px;width:107.7px;height:1.2px;background:#777;"></div><div class="a" style="left:1667.5px;top:951px;width:4px;height:12px;background:#555;"></div><svg class="a" style="left:1728px;top:951px;" width="11" height="11" viewBox="0 0 11 11"><path d="M5.5 0.5 V10.5 M0.5 5.5 H10.5" stroke="#555" stroke-width="1.2"/></svg><div class="t" style="left:1752px;top:952.77px;font-size:11.5px;color:#555;font-weight:400;">100%</div><div class="a" style="left:132px;top:969px;width:1656px;height:51px;background:linear-gradient(90deg,#d8e4ef 0%,#dde6ef 19%,#e9dbe8 27%,#efdfe5 35%,#f2e5e3 68%,#e6e4ec 79%,#d9e6f0 90%,#d6e6f1 100%);"></div><div class="a" style="left:1153.75px;top:974.4px;width:37.25px;height:41.2px;background:rgba(255,255,255,0.55);border-radius:4px"></div><div class="a" style="left:1165px;top:1012px;width:18px;height:2.5px;background:#0067c0;border-radius:1.5px"></div><div class="a" style="left:1217px;top:1012.5px;width:8px;height:2.3px;background:#888;border-radius:1.5px"></div><svg class="a" style="left:686.7px;top:982.5px;" width="26.0" height="26.0" viewBox="0 0 26.0 26.0"><g transform="scale(1.0)"><defs><linearGradient id="ws" x1="0" y1="0" x2="1" y2="1"><stop offset="0" stop-color="#3ccbf4"/><stop offset="1" stop-color="#1f7ae0"/></linearGradient></defs><rect x="1" y="1" width="11.6" height="11.6" rx="1" fill="url(#ws)"/><rect x="13.4" y="1" width="11.6" height="11.6" rx="1" fill="url(#ws)"/><rect x="1" y="13.4" width="11.6" height="11.6" rx="1" fill="url(#ws)"/><rect x="13.4" y="13.4" width="11.6" height="11.6" rx="1" fill="url(#ws)"/></g></svg><svg class="a" style="left:734.5px;top:982.5px;" width="26.0" height="26.0" viewBox="0 0 26.0 26.0"><g transform="scale(1.0)"><circle cx="15" cy="10.5" r="8" stroke="#1a1a1a" stroke-width="2.6" fill="none"/><path d="M9.5 16 L2.5 23" stroke="#1a1a1a" stroke-width="3.2" stroke-linecap="round"/></g></svg><svg class="a" style="left:781.0px;top:982.5px;" width="26.0" height="26.0" viewBox="0 0 26.0 26.0"><g transform="scale(1.0)"><rect x="9" y="1" width="16" height="15" rx="1.5" fill="#f2f2f2" stroke="#cfcfcf" stroke-width="0.6"/><rect x="5" y="6" width="14" height="13" rx="1" fill="#a8a8a8"/><rect x="1" y="10" width="16" height="15" rx="1.5" fill="#1f1f1f"/><rect x="7" y="10" width="10" height="9" fill="#9b9b9b"/></g></svg><svg class="a" style="left:829.8px;top:982.5px;" width="26.0" height="26.0" viewBox="0 0 26.0 26.0"><g transform="scale(1.0)"><rect x="1" y="1" width="24" height="24" rx="2" fill="#1d6fd1"/><rect x="3.5" y="3.5" width="8" height="19" rx="1" fill="#f4f8fc"/><rect x="14" y="3.5" width="8.5" height="9" rx="1" fill="#6ccff6"/><rect x="14" y="14" width="8.5" height="3.7" fill="#3aa3e8"/><rect x="14" y="18.8" width="8.5" height="3.7" fill="#3aa3e8"/></g></svg><svg class="a" style="left:876.7px;top:982.5px;" width="26.0" height="26.0" viewBox="0 0 26.0 26.0"><g transform="scale(1.0)"><path d="M13 1 A12 12 0 1 1 6 22.5 L1.5 24.5 L3 19.5 A12 12 0 0 1 13 1 Z" fill="#6b63d9"/><rect x="6.5" y="9" width="9" height="8" rx="1.5" fill="#fff"/><path d="M16 11.5 L20 9 V17 L16 14.5 Z" fill="#fff"/></g></svg><svg class="a" style="left:924.2px;top:982.5px;" width="26.0" height="26.0" viewBox="0 0 26.0 26.0"><g transform="scale(1.0)"><path d="M25 14 A12 12 0 1 1 13 1 C20 1 25 6 25 11.5 C25 15 22 17 18.5 17 C15 17 13.5 15.5 14 13 C10 13 8.5 17 10 20 C12 24 17 25 21 23" fill="#1b7fd6"/><path d="M1.5 11 C3 4 8 1 13 1 C20 1 25 6 25 12 C25 15 22.5 17 19 17 C16 17 14 15.5 14.5 13 C14.5 10 11 8.5 7.5 9.5 C4.5 10.5 2.5 12.5 1.5 14 Z" fill="#3ad06e"/><path d="M3 9 C5 4 9 1.5 13 1.5 C19 1.5 24 5.5 24.5 11 C22 8 18 6.5 13.5 7 C9 7.5 5 9 3 11 Z" fill="#2db7e8"/></g></svg><svg class="a" style="left:972.0px;top:982.5px;" width="26.0" height="26.0" viewBox="0 0 26.0 26.0"><g transform="scale(1.0)"><path d="M1 4 Q1 2.5 2.5 2.5 H9 L11.5 5 H23.5 Q25 5 25 6.5 V8 H1 Z" fill="#e6a817"/><rect x="1" y="7" width="24" height="17" rx="1.2" fill="#fcd04b"/><rect x="7" y="18" width="12" height="3" rx="1" fill="#1b73c9"/><rect x="1" y="21" width="24" height="3" rx="1" fill="#f3b829"/></g></svg><svg class="a" style="left:1018.9000000000001px;top:982.5px;" width="26.0" height="26.0" viewBox="0 0 26.0 26.0"><g transform="scale(1.0)"><path d="M8 7 V4.5 Q8 1.5 13 1.5 Q18 1.5 18 4.5 V7" stroke="#2b2b2b" stroke-width="2" fill="none"/><rect x="1.5" y="7" width="23" height="18" rx="2" fill="#2b2b2b"/><rect x="8.5" y="11" width="4" height="4" fill="#f35325"/><rect x="13.5" y="11" width="4" height="4" fill="#81bc06"/><rect x="8.5" y="16" width="4" height="4" fill="#05a6f0"/><rect x="13.5" y="16" width="4" height="4" fill="#ffba08"/></g></svg><svg class="a" style="left:1066.7px;top:982.5px;" width="26.0" height="26.0" viewBox="0 0 26.0 26.0"><g transform="scale(1.0)"><defs><linearGradient id="ap" x1="1" y1="0" x2="0" y2="1"><stop offset="0" stop-color="#00a6ff"/><stop offset="1" stop-color="#5a1dff"/></linearGradient></defs><rect x="1" y="1" width="24" height="24" fill="url(#ap)"/><path d="M5 19 L11 7 H14 L8 19 Z M11 19 L17 7 H20 V19 H16.5 V15 L14.5 19 Z" fill="#fff" opacity="0.92"/></g></svg><svg class="a" style="left:1113.6px;top:982.5px;" width="26.0" height="26.0" viewBox="0 0 26.0 26.0"><g transform="scale(1.0)"><path fill-rule="evenodd" d="M2.5 1 L13 6.5 L23.5 1 V21 L13 25.5 L2.5 21 Z M7.5 9 V18 L13 20.8 L18.5 18 V9 L13 12 Z" fill="#c1272d"/></g></svg><svg class="a" style="left:1161.0px;top:982.5px;" width="26.0" height="26.0" viewBox="0 0 26.0 26.0"><g transform="scale(1.0)"><rect x="7" y="1.5" width="18" height="23" rx="1.5" fill="#185c37"/><rect x="7" y="1.5" width="18" height="8" rx="1" fill="#33c481"/><rect x="7" y="9" width="18" height="8" fill="#21a366"/><rect x="16" y="9" width="9" height="15.5" fill="#107c41"/><rect x="1" y="6" width="13" height="13" rx="1.5" fill="#107c41"/><path d="M4.2 9.2 L10.8 15.8 M10.8 9.2 L4.2 15.8" stroke="#fff" stroke-width="1.8"/></g></svg><svg class="a" style="left:1208.6px;top:982.5px;" width="26.0" height="26.0" viewBox="0 0 26.0 26.0"><g transform="scale(1.0)"><path d="M13 13 L23.39 7 A12 12 0 0 0 2.61 7 Z" fill="#ea4335"/><path d="M13 13 L13 25 A12 12 0 0 0 23.39 7 Z" fill="#fbbc04"/><path d="M13 13 L2.61 7 A12 12 0 0 0 13 25 Z" fill="#34a853"/><path d="M13 13 L23.39 7 L18 10 Z" fill="#ea4335"/><circle cx="13" cy="13" r="5.7" fill="#fff"/><circle cx="13" cy="13" r="4.5" fill="#4285f4"/></g></svg><svg class="a" style="left:1473px;top:990px;" width="17" height="10" viewBox="0 0 17 10"><path d="M1 9 L8.5 1.5 L16 9" stroke="#333" stroke-width="1.3" fill="none"/></svg><div class="t" style="left:1690px;top:996.84px;font-size:12px;color:#333;font-weight:400;">5/3/2022</div><div class="a" style="left:1496.7px;top:959px;width:304.3px;height:45px;background:#f4f6f9;border:1px solid #d9dde2;border-radius:8px;box-shadow:0 3px 8px rgba(0,0,0,0.14)"></div><svg class="a" style="left:1516px;top:972px;" width="20" height="20" viewBox="0 0 20 20"><path d="M10 1.5 L12 1.5 L12.6 4.2 L14.6 5.1 L17 3.6 L18.4 5 L16.9 7.4 L17.8 9.4 L20.5 10 V12 L17.8 12.6 L16.9 14.6 L18.4 17 L17 18.4 L14.6 16.9 L12.6 17.8 L12 20.5 H10 L9.4 17.8 L7.4 16.9 L5 18.4 L3.6 17 L5.1 14.6 L4.2 12.6 L1.5 12 V10 L4.2 9.4 L5.1 7.4 L3.6 5 L5 3.6 L7.4 5.1 L9.4 4.2 Z" transform="scale(0.9) translate(0.5 0.5)" stroke="#333" stroke-width="1.2" fill="none" stroke-linejoin="round"/><circle cx="10" cy="10" r="3" stroke="#333" stroke-width="1.2" fill="none"/></svg><div class="t" style="left:1552px;top:974.59px;font-size:17.5px;color:#1a1a1a;font-weight:400;transform:scaleX(0.995);transform-origin:0 0;">Network and Internet settings</div><div class="a" style="left:0px;top:1020px;width:1920px;height:60px;background:linear-gradient(90deg,#d5e1ed 0%,#dbe6ef 21%,#e6e0ea 27%,#eddde8 32%,#f1e2e4 44%,#f2e6e2 70%,#e5e6ee 76%,#d8e8f2 83%,#d3e8f3 100%);"></div><div class="a" style="left:1788px;top:1020px;width:132px;height:1px;background:rgba(0,0,0,0.03);"></div><div class="a" style="left:1212.5px;top:1026px;width:46.5px;height:48px;background:rgba(255,255,255,0.55);border-radius:5px"></div><div class="a" style="left:1225px;top:1071px;width:20px;height:3px;background:#0067c0;border-radius:1.5px"></div><svg class="a" style="left:669.5px;top:1034.5px;" width="31.0" height="31.0" viewBox="0 0 31.0 31.0"><g transform="scale(1.1923076923076923)"><defs><linearGradient id="ws" x1="0" y1="0" x2="1" y2="1"><stop offset="0" stop-color="#3ccbf4"/><stop offset="1" stop-color="#1f7ae0"/></linearGradient></defs><rect x="1" y="1" width="11.6" height="11.6" rx="1" fill="url(#ws)"/><rect x="13.4" y="1" width="11.6" height="11.6" rx="1" fill="url(#ws)"/><rect x="1" y="13.4" width="11.6" height="11.6" rx="1" fill="url(#ws)"/><rect x="13.4" y="13.4" width="11.6" height="11.6" rx="1" fill="url(#ws)"/></g></svg><svg class="a" style="left:725.5px;top:1034.5px;" width="31.0" height="31.0" viewBox="0 0 31.0 31.0"><g transform="scale(1.1923076923076923)"><circle cx="15" cy="10.5" r="8" stroke="#1a1a1a" stroke-width="2.6" fill="none"/><path d="M9.5 16 L2.5 23" stroke="#1a1a1a" stroke-width="3.2" stroke-linecap="round"/></g></svg><svg class="a" style="left:779.5px;top:1034.5px;" width="31.0" height="31.0" viewBox="0 0 31.0 31.0"><g transform="scale(1.1923076923076923)"><rect x="9" y="1" width="16" height="15" rx="1.5" fill="#f2f2f2" stroke="#cfcfcf" stroke-width="0.6"/><rect x="5" y="6" width="14" height="13" rx="1" fill="#a8a8a8"/><rect x="1" y="10" width="16" height="15" rx="1.5" fill="#1f1f1f"/><rect x="7" y="10" width="10" height="9" fill="#9b9b9b"/></g></svg><svg class="a" style="left:835.5px;top:1034.5px;" width="31.0" height="31.0" viewBox="0 0 31.0 31.0"><g transform="scale(1.1923076923076923)"><rect x="1" y="1" width="24" height="24" rx="2" fill="#1d6fd1"/><rect x="3.5" y="3.5" width="8" height="19" rx="1" fill="#f4f8fc"/><rect x="14" y="3.5" width="8.5" height="9" rx="1" fill="#6ccff6"/><rect x="14" y="14" width="8.5" height="3.7" fill="#3aa3e8"/><rect x="14" y="18.8" width="8.5" height="3.7" fill="#3aa3e8"/></g></svg><svg class="a" style="left:889.5px;top:1034.5px;" width="31.0" height="31.0" viewBox="0 0 31.0 31.0"><g transform="scale(1.1923076923076923)"><path d="M13 1 A12 12 0 1 1 6 22.5 L1.5 24.5 L3 19.5 A12 12 0 0 1 13 1 Z" fill="#6b63d9"/><rect x="6.5" y="9" width="9" height="8" rx="1.5" fill="#fff"/><path d="M16 11.5 L20 9 V17 L16 14.5 Z" fill="#fff"/></g></svg><svg class="a" style="left:945.5px;top:1034.5px;" width="31.0" height="31.0" viewBox="0 0 31.0 31.0"><g transform="scale(1.1923076923076923)"><path d="M25 14 A12 12 0 1 1 13 1 C20 1 25 6 25 11.5 C25 15 22 17 18.5 17 C15 17 13.5 15.5 14 13 C10 13 8.5 17 10 20 C12 24 17 25 21 23" fill="#1b7fd6"/><path d="M1.5 11 C3 4 8 1 13 1 C20 1 25 6 25 12 C25 15 22.5 17 19 17 C16 17 14 15.5 14.5 13 C14.5 10 11 8.5 7.5 9.5 C4.5 10.5 2.5 12.5 1.5 14 Z" fill="#3ad06e"/><path d="M3 9 C5 4 9 1.5 13 1.5 C19 1.5 24 5.5 24.5 11 C22 8 18 6.5 13.5 7 C9 7.5 5 9 3 11 Z" fill="#2db7e8"/></g></svg><svg class="a" style="left:999.5px;top:1034.5px;" width="31.0" height="31.0" viewBox="0 0 31.0 31.0"><g transform="scale(1.1923076923076923)"><path d="M1 4 Q1 2.5 2.5 2.5 H9 L11.5 5 H23.5 Q25 5 25 6.5 V8 H1 Z" fill="#e6a817"/><rect x="1" y="7" width="24" height="17" rx="1.2" fill="#fcd04b"/><rect x="7" y="18" width="12" height="3" rx="1" fill="#1b73c9"/><rect x="1" y="21" width="24" height="3" rx="1" fill="#f3b829"/></g></svg><svg class="a" style="left:1054.5px;top:1034.5px;" width="31.0" height="31.0" viewBox="0 0 31.0 31.0"><g transform="scale(1.1923076923076923)"><path d="M8 7 V4.5 Q8 1.5 13 1.5 Q18 1.5 18 4.5 V7" stroke="#2b2b2b" stroke-width="2" fill="none"/><rect x="1.5" y="7" width="23" height="18" rx="2" fill="#2b2b2b"/><rect x="8.5" y="11" width="4" height="4" fill="#f35325"/><rect x="13.5" y="11" width="4" height="4" fill="#81bc06"/><rect x="8.5" y="16" width="4" height="4" fill="#05a6f0"/><rect x="13.5" y="16" width="4" height="4" fill="#ffba08"/></g></svg><svg class="a" style="left:1109.5px;top:1034.5px;" width="31.0" height="31.0" viewBox="0 0 31.0 31.0"><g transform="scale(1.1923076923076923)"><defs><linearGradient id="ap" x1="1" y1="0" x2="0" y2="1"><stop offset="0" stop-color="#00a6ff"/><stop offset="1" stop-color="#5a1dff"/></linearGradient></defs><rect x="1" y="1" width="24" height="24" fill="url(#ap)"/><path d="M5 19 L11 7 H14 L8 19 Z M11 19 L17 7 H20 V19 H16.5 V15 L14.5 19 Z" fill="#fff" opacity="0.92"/></g></svg><svg class="a" style="left:1164.5px;top:1034.5px;" width="31.0" height="31.0" viewBox="0 0 31.0 31.0"><g transform="scale(1.1923076923076923)"><path fill-rule="evenodd" d="M2.5 1 L13 6.5 L23.5 1 V21 L13 25.5 L2.5 21 Z M7.5 9 V18 L13 20.8 L18.5 18 V9 L13 12 Z" fill="#c1272d"/></g></svg><svg class="a" style="left:1219.5px;top:1034.5px;" width="31.0" height="31.0" viewBox="0 0 31.0 31.0"><g transform="scale(1.1923076923076923)"><path d="M13 13 L23.39 7 A12 12 0 0 0 2.61 7 Z" fill="#ea4335"/><path d="M13 13 L13 25 A12 12 0 0 0 23.39 7 Z" fill="#fbbc04"/><path d="M13 13 L2.61 7 A12 12 0 0 0 13 25 Z" fill="#34a853"/><path d="M13 13 L23.39 7 L18 10 Z" fill="#ea4335"/><circle cx="13" cy="13" r="5.7" fill="#fff"/><circle cx="13" cy="13" r="4.5" fill="#4285f4"/></g></svg><svg class="a" style="left:1549px;top:1044px;" width="19" height="12" viewBox="0 0 19 12"><path d="M1 10.5 L9.5 2 L18 10.5" stroke="#222" stroke-width="1.4" fill="none"/></svg><svg class="a" style="left:1577px;top:1040px;" width="24" height="18" viewBox="0 0 24 18"><path d="M5 16 H19 Q23 16 23 12 Q23 8.5 19.5 8 Q19 3 14 3 Q10.5 3 9 6 Q5.5 5.5 4.5 9 Q1 9.5 1 12.5 Q1 16 5 16 Z" stroke="#333" stroke-width="1.3" fill="#e0e0e0"/></svg><svg class="a" style="left:1606px;top:1036px;" width="28" height="28" viewBox="0 0 28 28"><path d="M5 12 A9 9 0 0 1 21 8 M21 3 V8 H16" stroke="#333" stroke-width="1.5" fill="none"/><path d="M22 16 A9 9 0 0 1 6 20 M6 25 V20 H11" stroke="#333" stroke-width="1.5" fill="none"/><circle cx="21" cy="20" r="4.5" fill="#e81123"/></svg><div class="t" style="left:1647.5px;top:1045.3px;font-size:15px;color:#1a1a1a;font-weight:400;transform:scaleX(0.96);transform-origin:0 0;">ENG</div><svg class="a" style="left:1696px;top:1040px;" width="25" height="20" viewBox="0 0 25 20"><path d="M1.5 7 Q12.5 -2.5 23.5 7" stroke="#1a1a1a" stroke-width="1.6" fill="none"/><path d="M5 10.5 Q12.5 4 20 10.5" stroke="#1a1a1a" stroke-width="1.6" fill="none"/><path d="M8.5 14 Q12.5 10.5 16.5 14" stroke="#1a1a1a" stroke-width="1.6" fill="none"/><circle cx="12.5" cy="17.5" r="1.8" fill="#1a1a1a"/></svg><svg class="a" style="left:1727px;top:1040px;" width="24" height="20" viewBox="0 0 24 20"><path d="M2 7 H6 L11 2 V18 L6 13 H2 Z" stroke="#1a1a1a" stroke-width="1.4" fill="none" stroke-linejoin="round"/><path d="M14 6.5 Q16 10 14 13.5 M17 4 Q20.5 10 17 16 M20 2 Q24.5 10 20 18" stroke="#1a1a1a" stroke-width="1.4" fill="none"/></svg><svg class="a" style="left:1756px;top:1042px;" width="26" height="15" viewBox="0 0 26 15"><rect x="1" y="1" width="21" height="13" rx="2.5" stroke="#1a1a1a" stroke-width="1.5" fill="none"/><rect x="3.5" y="3.5" width="16" height="8" rx="1" fill="#1a1a1a"/><rect x="22.5" y="5" width="2.5" height="5" rx="1" fill="#1a1a1a"/></svg><div class="t" style="left:1806.5px;top:1032.13px;font-size:15.2px;color:#1a1a1a;font-weight:400;transform:scaleX(0.97);transform-origin:0 0;">6:57 AM</div><div class="t" style="left:1801px;top:1052.13px;font-size:15.2px;color:#1a1a1a;font-weight:400;transform:scaleX(0.97);transform-origin:0 0;">5/4/2022</div><div class="a" style="left:1876px;top:1040px;width:20px;height:20px;background:#0067c0;border-radius:50%"></div><div class="t" style="left:1882px;top:1045.0px;font-size:13px;color:#fff;font-weight:700;">1</div></body></html>
